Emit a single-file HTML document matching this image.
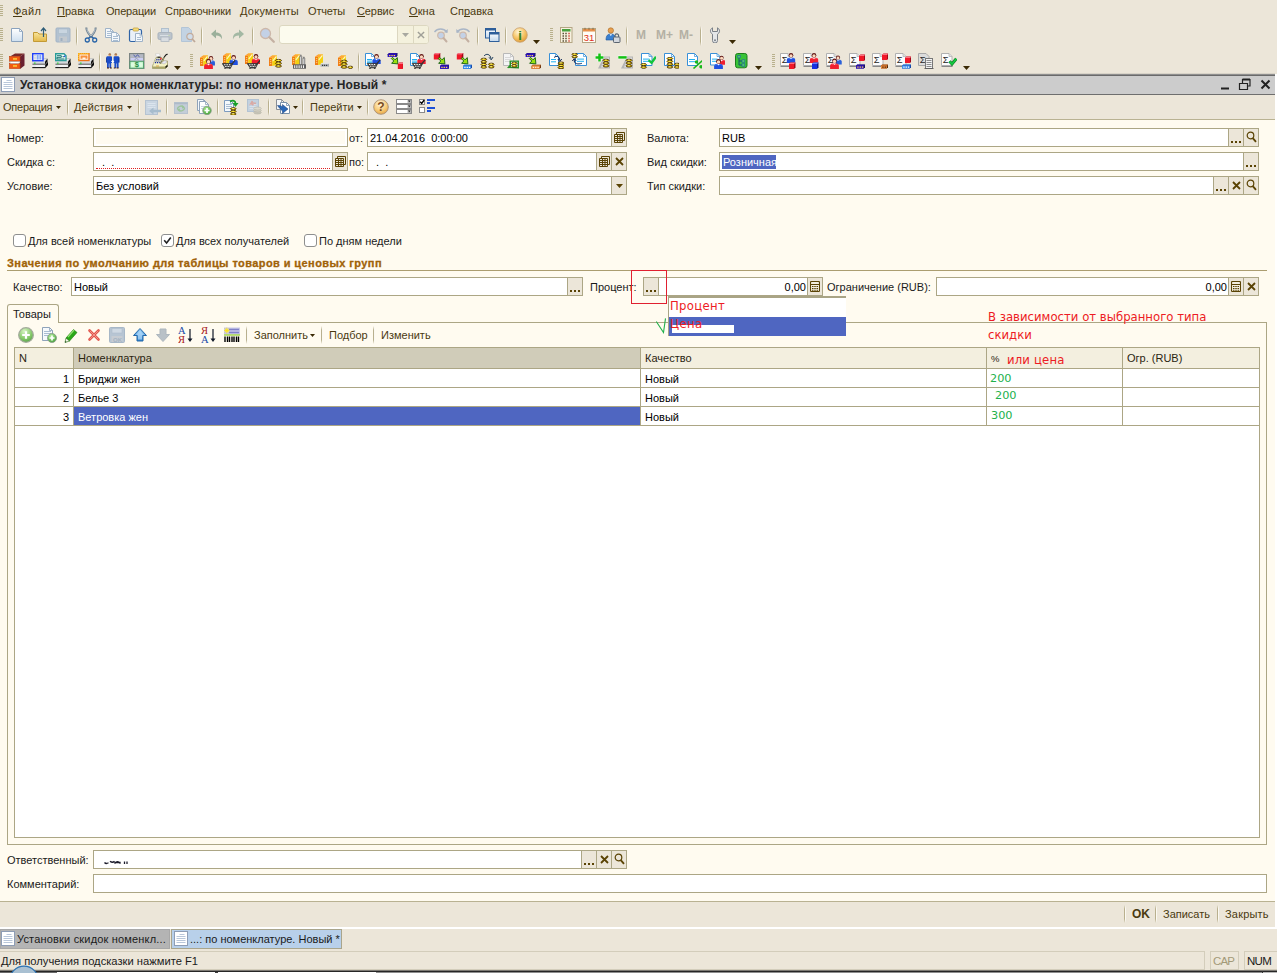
<!DOCTYPE html>
<html lang="ru"><head><meta charset="utf-8"><title>Установка скидок номенклатуры</title>
<style>
html,body{margin:0;padding:0}
body{width:1277px;height:973px;overflow:hidden;position:relative;background:#ece6d9;font-family:"Liberation Sans",sans-serif;font-size:11px;color:#000}
body div,body svg.i{position:absolute}
.g{left:0;top:0;width:0;height:0}
.t{white-space:pre;line-height:13px}
.t u{text-decoration:underline}
.grip{width:3px}
.grip i{position:absolute;left:0;width:3px;height:1px;background:#b8b08c}
.vs{width:2px;background:linear-gradient(to right,#b9b08e 0 1px,#fbf9f2 1px 2px);-webkit-mask-image:linear-gradient(to bottom,transparent,#000 22%,#000 78%,transparent);mask-image:linear-gradient(to bottom,transparent,#000 22%,#000 78%,transparent)}
</style></head>
<body>
<div class="g" id="menubar">
<div class="grip" style="left:0px;top:5px;height:12px"><i style="top:0px"></i><i style="top:2px"></i><i style="top:4px"></i><i style="top:6px"></i><i style="top:8px"></i><i style="top:10px"></i></div>
<div class="t" style="left:13px;top:5px;color:#4a3a10;letter-spacing:0.25px">Файл</div>
<div style="left:13px;top:16px;width:8.6px;height:1px;background:#4a3a10"></div>
<div class="t" style="left:57px;top:5px;color:#4a3a10">Правка</div>
<div style="left:57px;top:16px;width:7.9px;height:1px;background:#4a3a10"></div>
<div class="t" style="left:106px;top:5px;color:#4a3a10;letter-spacing:-0.19px">Операции</div>
<div class="t" style="left:165px;top:5px;color:#4a3a10;letter-spacing:-0.05px">Справочники</div>
<div class="t" style="left:240px;top:5px;color:#4a3a10;letter-spacing:0.25px">Документы</div>
<div class="t" style="left:308px;top:5px;color:#4a3a10;letter-spacing:-0.16px">Отчеты</div>
<div class="t" style="left:357px;top:5px;color:#4a3a10;letter-spacing:-0.1px">Сервис</div>
<div style="left:357px;top:16px;width:7.9px;height:1px;background:#4a3a10"></div>
<div class="t" style="left:409px;top:5px;color:#4a3a10;letter-spacing:0.1px">Окна</div>
<div style="left:409px;top:16px;width:8.7px;height:1px;background:#4a3a10"></div>
<div class="t" style="left:450px;top:5px;color:#4a3a10">Справка</div>
<div style="left:463.9px;top:16px;width:6.1px;height:1px;background:#4a3a10"></div>
</div>
<div class="g" id="toolbar-standard">
<div class="grip" style="left:0px;top:28px;height:14px"><i style="top:0px"></i><i style="top:2px"></i><i style="top:4px"></i><i style="top:6px"></i><i style="top:8px"></i><i style="top:10px"></i><i style="top:12px"></i></div>
<svg class="i" style="left:9px;top:27px" width="16" height="16" viewBox="0 0 16 16"><defs><linearGradient id="g1" x1="0" y1="0" x2="0" y2="1"><stop offset="0" stop-color="#ffffff"/><stop offset="1" stop-color="#cfe0f0"/></linearGradient></defs><path d="M2.5 1.5h8l3 3v10h-11z" fill="url(#g1)" stroke="#8aa2bd"/><path d="M10.5 1.5v3h3" fill="none" stroke="#8aa2bd" stroke-width=".8"/></svg>
<svg class="i" style="left:32px;top:27px" width="16" height="16" viewBox="0 0 16 16"><defs><linearGradient id="g2" x1="0" y1="0" x2="0" y2="1"><stop offset="0" stop-color="#f8e49a"/><stop offset="1" stop-color="#e3b94a"/></linearGradient></defs><path d="M1.500 5.500h4l1.500 1.500h7.500v7.500h-13z" fill="url(#g2)" stroke="#c39a36"/><path d="M11.500 10v-8.500M9 4l2.500-3l2.500 3" stroke="#2f5d78" stroke-width="1.200" fill="none"/></svg>
<svg class="i" style="left:55px;top:27px" width="16" height="16" viewBox="0 0 16 16"><rect x="1" y="1" width="14" height="14" rx="1" fill="#b3c2d1" stroke="#a3b4c6"/><rect x="3.500" y="2" width="9" height="4.500" fill="#c9d5e0" stroke="#a9b9c9" stroke-width=".6"/><rect x="4" y="9.500" width="8" height="5" fill="#c4c9ce"/><rect x="5.500" y="11" width="2" height="3" fill="#9fb0c0"/></svg>
<div class="vs" style="left:76px;top:26px;height:20px"></div>
<svg class="i" style="left:83px;top:27px" width="16" height="16" viewBox="0 0 16 16"><path d="M3.300 .5c0 3 2.200 6.500 5.700 10M12.700 .5c0 3-2.200 6.500-5.700 10" stroke="#6f8190" stroke-width="2" fill="none"/><path d="M3.800 1.500c.3 2.500 1.800 5 4.200 7.500M12.200 1.500c-.3 2.500-1.800 5-4.200 7.500" stroke="#d5dfe6" stroke-width=".7" fill="none"/><circle cx="4.300" cy="13" r="2" fill="none" stroke="#2b66a9" stroke-width="1.300"/><circle cx="11.700" cy="13" r="2" fill="none" stroke="#2b66a9" stroke-width="1.300"/><path d="M5.500 11.300L7.500 9.500M10.500 11.300L8.500 9.500" stroke="#2b66a9" stroke-width="1.400" fill="none"/></svg>
<svg class="i" style="left:105px;top:27px" width="16" height="16" viewBox="0 0 16 16"><path d="M0.5 1.5h5l3 3v6h-8z" fill="#f4f8fc" stroke="#9fb3c8"/><path d="M5.5 1.5v3h3" fill="none" stroke="#9fb3c8" stroke-width=".8"/><path d="M2 4.5h5" stroke="#a9bdd2" stroke-width="1"/><path d="M2 6.5h5" stroke="#a9bdd2" stroke-width="1"/><path d="M2 8.5h5" stroke="#a9bdd2" stroke-width="1"/><path d="M6.5 5.5h5l3 3v6h-8z" fill="#f4f8fc" stroke="#9fb3c8"/><path d="M11.5 5.5v3h3" fill="none" stroke="#9fb3c8" stroke-width=".8"/><path d="M8 9.5h5" stroke="#a9bdd2" stroke-width="1"/><path d="M8 11.5h5" stroke="#a9bdd2" stroke-width="1"/><path d="M8 13.5h5" stroke="#a9bdd2" stroke-width="1"/></svg>
<svg class="i" style="left:128px;top:27px" width="16" height="16" viewBox="0 0 16 16"><rect x="1.500" y="2.500" width="12" height="12" rx="1.500" fill="#e9f0f8" stroke="#2f63a6" stroke-width="1.200"/><rect x="5" y="1" width="5.500" height="3" rx="1" fill="#f4dc7c" stroke="#c8a23c" stroke-width=".8"/><path d="M7.5 6.5h4.5l2.5 2.5v5.5h-7z" fill="#f4f8fc" stroke="#9fb3c8"/><path d="M12.0 6.5v2.5h2.5" fill="none" stroke="#9fb3c8" stroke-width=".8"/><path d="M9 10.5h4" stroke="#a9bdd2" stroke-width="1"/><path d="M9 12.5h4" stroke="#a9bdd2" stroke-width="1"/></svg>
<div class="vs" style="left:150px;top:26px;height:20px"></div>
<svg class="i" style="left:157px;top:27px" width="16" height="16" viewBox="0 0 16 16"><rect x="4.500" y="1.500" width="7" height="5" fill="#cfdbe6" stroke="#b0bfcd"/><rect x="1" y="5.500" width="14" height="7" rx="1.500" fill="#bcc4cc" stroke="#a9b3bd"/><rect x="4" y="10" width="8" height="4.500" fill="#d9dde1" stroke="#aeb7c0" stroke-width=".8"/><path d="M3 8.500h10" stroke="#d9dfe5" stroke-width="1"/><rect x="11.500" y="8" width="1.200" height="1" fill="#b9d0a0"/></svg>
<svg class="i" style="left:180px;top:27px" width="16" height="16" viewBox="0 0 16 16"><path d="M1.500 0.500h7l3 3v11h-10z" fill="#c3d3e3" stroke="#b3c5d7"/><circle cx="10" cy="9.500" r="3.200" fill="#d0ddea" stroke="#c2ab9c" stroke-width="1.200"/><path d="M12.200 12l2.800 3" stroke="#bda798" stroke-width="1.800"/></svg>
<div class="vs" style="left:201px;top:26px;height:20px"></div>
<svg class="i" style="left:209px;top:28px" width="16" height="16" viewBox="0 0 16 16"><path d="M2 6l5-4.500v3c4 0 6.500 2.500 6 7c-.8-2.500-2.500-4-6-4v3z" fill="#9bb09b"/></svg>
<svg class="i" style="left:230px;top:28px" width="16" height="16" viewBox="0 0 16 16"><path d="M14 6l-5-4.500v3c-4 0-6.500 2.500-6 7c.8-2.500 2.500-4 6-4v3z" fill="#a3b8a3"/></svg>
<div class="vs" style="left:252px;top:26px;height:20px"></div>
<svg class="i" style="left:259px;top:27px" width="16" height="16" viewBox="0 0 16 16"><circle cx="6.500" cy="6.500" r="5" fill="#c3d1e6" stroke="#cdb8aa" stroke-width="1.300"/><path d="M10.300 10.300l4.500 4.500" stroke="#c4b0a2" stroke-width="2.200" stroke-linecap="round"/></svg>
<div style="left:279px;top:25px;width:150px;height:19px;background:#fcfbee;border:1px solid #dcd7c0;border-radius:3px;box-sizing:border-box"></div>
<div style="left:398px;top:26px;width:30px;height:17px;background:#f4f1dd;border-radius:0 2px 2px 0"></div>
<div style="left:397px;top:26px;width:1px;height:17px;background:#dcd7c0"></div>
<div style="left:413px;top:26px;width:1px;height:17px;background:#dcd7c0"></div>
<svg class="i" style="left:402px;top:33px" width="7" height="4" viewBox="0 0 7 4"><path d="M0 0H7L3.5 4Z" fill="#a8a8a0"/></svg>
<svg class="i" style="left:417px;top:31px" width="8" height="8" viewBox="0 0 9 9"><path d="M1 1L8 8M8 1L1 8" stroke="#a0a098" stroke-width="1.6" fill="none"/></svg>
<svg class="i" style="left:433px;top:27px" width="16" height="16" viewBox="0 0 16 16"><path d="M1.500 5c3-4 9-4 12.500 0" stroke="#aab6c6" stroke-width="1.300" fill="none"/><path d="M14.800 2l-.3 4l-3.700-.8z" fill="#aab6c6"/><circle cx="8" cy="8.500" r="3.300" fill="#c3d1e6" stroke="#cdb8aa" stroke-width="1.200"/><path d="M10.500 11l3 3.500" stroke="#c4b0a2" stroke-width="2" stroke-linecap="round"/></svg>
<svg class="i" style="left:455px;top:27px" width="16" height="16" viewBox="0 0 16 16"><path d="M14.500 5c-3-4-9-4-12.500 0" stroke="#aab6c6" stroke-width="1.300" fill="none"/><path d="M1.200 2l.3 4l3.700-.8z" fill="#aab6c6"/><circle cx="8" cy="8.500" r="3.300" fill="#c3d1e6" stroke="#cdb8aa" stroke-width="1.200"/><path d="M10.500 11l3 3.500" stroke="#c4b0a2" stroke-width="2" stroke-linecap="round"/></svg>
<div class="vs" style="left:477px;top:26px;height:20px"></div>
<svg class="i" style="left:484px;top:27px" width="16" height="16" viewBox="0 0 16 16"><defs><linearGradient id="g3" x1="0" y1="0" x2="0" y2="1"><stop offset="0" stop-color="#ffffff"/><stop offset="1" stop-color="#c4d8ec"/></linearGradient></defs><rect x="1.500" y="1.500" width="10" height="9.500" fill="url(#g3)" stroke="#2e5f9a"/><path d="M1.500 2.500h10" stroke="#2e5f9a" stroke-width="2"/><rect x="5.500" y="5.500" width="9.500" height="9" fill="url(#g3)" stroke="#2e5f9a"/><path d="M5.500 6.500h9.500" stroke="#2e5f9a" stroke-width="2"/></svg>
<div class="vs" style="left:505px;top:26px;height:20px"></div>
<svg class="i" style="left:512px;top:27px" width="16" height="16" viewBox="0 0 16 16"><defs><radialGradient id="g4" cx=".4" cy=".3" r=".8"><stop offset="0" stop-color="#fff6dc"/><stop offset=".5" stop-color="#f7c76a"/><stop offset="1" stop-color="#d8912a"/></radialGradient></defs><circle cx="8" cy="8" r="7.300" fill="url(#g4)" stroke="#c8a070" stroke-width=".8"/><text x="8" y="13" text-anchor="middle" font-family="Liberation Sans,sans-serif" font-weight="bold" font-size="13" fill="#2e7d1e">i</text></svg>
<svg class="i" style="left:533px;top:40px" width="7" height="4" viewBox="0 0 7 4"><path d="M0 0H7L3.5 4Z" fill="#3b2a05"/></svg>
<div class="grip" style="left:550px;top:28px;height:14px"><i style="top:0px"></i><i style="top:2px"></i><i style="top:4px"></i><i style="top:6px"></i><i style="top:8px"></i><i style="top:10px"></i><i style="top:12px"></i></div>
<svg class="i" style="left:558px;top:27px" width="16" height="16" viewBox="0 0 16 16"><rect x="2.500" y="0.500" width="11.500" height="15" fill="#f8f2e0" stroke="#b4a684"/><rect x="4" y="2" width="8.500" height="2.500" fill="#48a040"/><path d="M4.500 6.500h1.500M7.250 6.500h1.500M4.500 9h1.500M7.250 9h1.500M4.500 11.500h1.500M7.250 11.500h1.500M4.500 14h1.500M7.250 14h1.500" stroke="#5a5038" stroke-width="1.300"/><path d="M10.300 6.500h1.500M10.300 9h1.500M10.300 11.500h1.500M10.300 14h1.500" stroke="#d05040" stroke-width="1.300"/></svg>
<svg class="i" style="left:581px;top:27px" width="16" height="16" viewBox="0 0 16 16"><rect x="1.500" y="1.500" width="13" height="14" fill="#fffdf6" stroke="#b4a684"/><rect x="2" y="2" width="12" height="2.500" fill="#e8904a"/><path d="M4 .8v2M8 .8v2M12 .8v2" stroke="#8a6a40" stroke-width="1"/><text x="8" y="13.800" text-anchor="middle" font-family="Liberation Sans,sans-serif" font-size="9.500" fill="#e03020">31</text></svg>
<svg class="i" style="left:605px;top:27px" width="16" height="16" viewBox="0 0 16 16"><circle cx="5.800" cy="3.500" r="2.700" fill="#e8a050" stroke="#a86820" stroke-width=".6"/><path d="M1 13c0-4.500 1.800-6 4.800-6s4.800 1.500 4.800 6z" fill="#3a80d0" stroke="#1f559a" stroke-width=".6"/><path d="M4.500 7.200l1.300 1.800l1.300-1.800z" fill="#fff"/><rect x="8.500" y="10" width="6.500" height="5.500" rx=".8" fill="#d4d8de" stroke="#5a6470"/><path d="M10 10v-1.300a1.800 1.800 0 0 1 3.600 0v1.300" stroke="#5a6470" stroke-width="1.100" fill="none"/></svg>
<div class="vs" style="left:626px;top:26px;height:20px"></div>
<div class="t" style="left:636px;top:29px;color:#b4b0a4;font-weight:bold;font-size:12px">M</div>
<div class="t" style="left:656px;top:29px;color:#b4b0a4;font-weight:bold;font-size:12px">M+</div>
<div class="t" style="left:679px;top:29px;color:#b4b0a4;font-weight:bold;font-size:12px">M-</div>
<div class="vs" style="left:700px;top:26px;height:20px"></div>
<svg class="i" style="left:707px;top:27px" width="16" height="16" viewBox="0 0 16 16"><path d="M5.500 0.800c-2 1-2.800 3.500-1.200 5.400l1.200 1v6.300a2.500 2.500 0 0 0 5 0v-6.300l1.200-1c1.600-1.900.8-4.400-1.200-5.400v3.700h-5z" fill="#e4e6e8" stroke="#7a8088" stroke-width="1"/><circle cx="8" cy="13.200" r="1" fill="#7a8088"/></svg>
<svg class="i" style="left:729px;top:40px" width="7" height="4" viewBox="0 0 7 4"><path d="M0 0H7L3.5 4Z" fill="#3b2a05"/></svg>
</div>
<div class="g" id="toolbar-app">
<div class="grip" style="left:0px;top:54px;height:14px"><i style="top:0px"></i><i style="top:2px"></i><i style="top:4px"></i><i style="top:6px"></i><i style="top:8px"></i><i style="top:10px"></i><i style="top:12px"></i></div>
<svg class="i" style="left:9px;top:53px" width="16" height="16" viewBox="0 0 16 16"><path d="M1 3.500l5-3h9.500l-4.500 3z" fill="#7a2a2a"/><path d="M11 3.500l4.500-3v12l-4.500 3.500z" fill="#6a2030"/><rect x="0.500" y="3.500" width="10.500" height="5" fill="#f05a10" stroke="#c03a08" stroke-width=".6"/><rect x="0.500" y="10.500" width="10.500" height="5" fill="#f05a10" stroke="#c03a08" stroke-width=".6"/><path d="M0.500 8.500h10.500l-1.500 2h-8z" fill="#ffffff" stroke="#888" stroke-width=".4"/><rect x="4" y="5.300" width="4" height="1.300" fill="#ffe040"/><rect x="4" y="12.300" width="4" height="1.300" fill="#ffe040"/></svg>
<svg class="i" style="left:32px;top:53px" width="16" height="16" viewBox="0 0 16 16"><path d="M.8 8.500l2.600-2.800h12.100l-2.600 2.800z" fill="#e6eaec" stroke="#8a8e92" stroke-width=".4"/><path d="M.5 8.500h12.500v2.700h-12.500z" fill="#c6cace"/><path d="M.5 9h12.500" stroke="#eef0f2" stroke-width=".8"/><path d="M.5 11.300h12.700" stroke="#3a3c3e" stroke-width=".9"/><path d="M13 8.500l2.500-2.800v2.900l-2.500 2.800z" fill="#0c0c0c"/><rect x="2" y="9.600" width="1.600" height="1" fill="#18d818"/><path d="M.3 11.800h12.900v2.400h-12.900z" fill="#e8eaec"/><path d="M3.500 13h8" stroke="#fff" stroke-width="1"/><path d="M.3 14.600h13" stroke="#161616" stroke-width="1.100"/><path d="M13.200 11.800l2.800-3.100v3.200l-2.800 3.300z" fill="#0c0c0c"/><rect x=".7" y=".7" width="10.300" height="7" fill="#eef3ff" stroke="#2040f8" stroke-width="1.400"/><path d="M5.300 1.800v4.800M7 1.800v4.800M8.700 1.800v4.800" stroke="#6a96f4" stroke-width="1"/><path d="M1.800 2.600h2.600M1.800 4.200h2.600M1.800 5.800h2.600" stroke="#c8ccd4" stroke-width=".9"/></svg>
<svg class="i" style="left:55px;top:53px" width="16" height="16" viewBox="0 0 16 16"><path d="M.8 8.500l2.600-2.800h12.100l-2.600 2.800z" fill="#e6eaec" stroke="#8a8e92" stroke-width=".4"/><path d="M.5 8.500h12.500v2.700h-12.500z" fill="#c6cace"/><path d="M.5 9h12.500" stroke="#eef0f2" stroke-width=".8"/><path d="M.5 11.300h12.700" stroke="#3a3c3e" stroke-width=".9"/><path d="M13 8.500l2.500-2.800v2.900l-2.500 2.800z" fill="#0c0c0c"/><rect x="2" y="9.600" width="1.600" height="1" fill="#18d818"/><path d="M.3 11.800h12.900v2.400h-12.900z" fill="#e8eaec"/><path d="M3.500 13h8" stroke="#fff" stroke-width="1"/><path d="M.3 14.600h13" stroke="#161616" stroke-width="1.100"/><path d="M13.200 11.800l2.800-3.100v3.200l-2.800 3.300z" fill="#0c0c0c"/><path d="M.7 .7h8.300l2 2v4.800h-10.300z" fill="#f4fffd" stroke="#2a9c98" stroke-width="1.400"/><path d="M2 2.700h4.300v1.600h-4.300M2 4.300v1.700h7.500M7.500 3.700l2 .1" stroke="#15706c" stroke-width="1" fill="none"/><rect x="9" y="2.600" width="1.300" height="1.300" fill="#2040f0"/></svg>
<svg class="i" style="left:78px;top:53px" width="16" height="16" viewBox="0 0 16 16"><path d="M.8 8.500l2.600-2.800h12.100l-2.600 2.800z" fill="#e6eaec" stroke="#8a8e92" stroke-width=".4"/><path d="M.5 8.500h12.500v2.700h-12.500z" fill="#c6cace"/><path d="M.5 9h12.500" stroke="#eef0f2" stroke-width=".8"/><path d="M.5 11.300h12.700" stroke="#3a3c3e" stroke-width=".9"/><path d="M13 8.500l2.500-2.800v2.900l-2.500 2.800z" fill="#0c0c0c"/><rect x="2" y="9.600" width="1.600" height="1" fill="#18d818"/><path d="M.3 11.800h12.900v2.400h-12.900z" fill="#e8eaec"/><path d="M3.500 13h8" stroke="#fff" stroke-width="1"/><path d="M.3 14.600h13" stroke="#161616" stroke-width="1.100"/><path d="M13.200 11.800l2.800-3.100v3.200l-2.800 3.300z" fill="#0c0c0c"/><rect x=".7" y=".7" width="10.300" height="6.800" fill="#fff4ea" stroke="#f07418" stroke-width="1.400"/><path d="M.7 .7h10.300M.7 .7v6.800" stroke="#ffe030" stroke-width="1.400" stroke-dasharray="1 1"/><path d="M2.500 2.500h7v3.300h-2v-1.300h-3v1.300h-2z" fill="#f8903c"/></svg>
<div class="vs" style="left:99px;top:52px;height:20px"></div>
<svg class="i" style="left:104px;top:53px" width="16" height="16" viewBox="0 0 16 16"><circle cx="5.800" cy="2" r="1.400" fill="#e0a878"/><path d="M4.400 1.500c.3-1.300 2.500-1.300 2.800 0z" fill="#7a5030"/><circle cx="11.800" cy="2" r="1.400" fill="#e0a878"/><path d="M10.400 1.500c.3-1.300 2.500-1.300 2.800 0z" fill="#7a5030"/><path d="M2.300 4.200q.2-1 1.200-1h3.500q1 0 1 1v5.800h-.8v5h-1.800v-4.500h-.6v4.500h-1.800v-5.500h-.7z" fill="#1a4cc8"/><path d="M15.300 4.200q-.2-1-1.200-1h-3.500q-1 0-1 1v5.800h.8v5h1.800v-4.500h.6v4.500h1.800v-5.500h.7z" fill="#1a4cc8"/><path d="M2.300 4.200v5.300h.7v-4.500zM15.300 4.200v5.300h-.7v-4.500z" fill="#0c2c88"/><path d="M7 8.600l1.700-1.500l1.700 1.500l-1.700 1.500z" fill="#fff"/><path d="M3 15h2M6 15h1.800M9.800 15h1.800M12.600 15h2" stroke="#4a2010" stroke-width="1"/></svg>
<svg class="i" style="left:129px;top:53px" width="16" height="16" viewBox="0 0 16 16"><g transform="translate(-1,0)"><rect x="1.500" y="0.500" width="14.500" height="15" fill="#a8acac" stroke="#7c8484"/><path d="M2.500 1.500h12.500v2.800h-12.500z" fill="#b4b8c4"/><path d="M5.500 2l2 1.800l2-1.800l2 1.800" stroke="#3848a8" stroke-width=".9" fill="none"/><path d="M2.500 4.800h12.500v2.800h-12.500z" fill="#cccef4"/><path d="M6.500 6.800l2-1.300l2 1.300" stroke="#8890a0" stroke-width=".8" fill="none"/><rect x="2" y="8.300" width="13.500" height="6.900" fill="#c4f4cc" stroke="#4c9c68" stroke-width=".9"/><ellipse cx="4.800" cy="11.700" rx="2" ry="2.300" fill="#dcfce0"/><ellipse cx="12.700" cy="11.700" rx="2" ry="2.300" fill="#dcfce0"/><text x="8.750" y="14.400" text-anchor="middle" font-family="Liberation Sans,sans-serif" font-weight="bold" font-size="7.500" fill="#2a8c48">$</text></g></svg>
<svg class="i" style="left:152px;top:53px" width="16" height="16" viewBox="0 0 16 16"><path d="M.5 13l3.500-8.500h5.500l2.300 3.500h3.700v5.500l-2 2h-13z" fill="#f4f2c4" stroke="#8a8850" stroke-width=".6"/><path d="M.5 13.500h13l2-2v2l-2 2h-13z" fill="#a8a468"/><path d="M13.500 13.500l2-2v2l-2 2z" fill="#181810"/><path d="M4 5.500h5l-1.800 5.500h-5.700z" fill="#f4f2c4"/><path d="M4.300 6.300h1.200M6.300 6.300h1.200M8.300 6.300h.8M3.500 8h1.200M5.500 8h1.200M7.500 8h1M2.800 9.700h1.200M4.800 9.700h1.200M6.800 9.700h1" stroke="#1c2c9c" stroke-width="1.200"/><path d="M3.500 0.800h4l.8 2.500h-4z" fill="#fff" stroke="#b0b0b0" stroke-width=".4"/><path d="M5.500 4.200h3" stroke="#101010" stroke-width="1"/><path d="M8.500 10.500l4.500-7.500c.5-1.500 2-1.500 2.500-2" stroke="#101010" stroke-width="1.100" fill="none"/><path d="M8.800 10.300l3.600-6" stroke="#b4b078" stroke-width="1"/><rect x="8.300" y="4.800" width="1.300" height="1.800" fill="#f01818"/><path d="M9.500 10l3.500-2.500l2 1.500l-3 2z" fill="#e8e8f4" stroke="#a0a0a8" stroke-width=".4"/><path d="M4 13h3" stroke="#d89830" stroke-width=".8"/></svg>
<svg class="i" style="left:174px;top:66px" width="7" height="4" viewBox="0 0 7 4"><path d="M0 0H7L3.5 4Z" fill="#3b2a05"/></svg>
<div class="grip" style="left:190px;top:54px;height:14px"><i style="top:0px"></i><i style="top:2px"></i><i style="top:4px"></i><i style="top:6px"></i><i style="top:8px"></i><i style="top:10px"></i><i style="top:12px"></i></div>
<svg class="i" style="left:199px;top:53px" width="16" height="16" viewBox="0 0 16 16"><g transform="translate(1,2)"><path d="M0 3l3.200-2.400v10.400h-3.200z" fill="#f07c14"/><path d="M3.200 .6h4.800v9.400l-4.800 1z" fill="#f4d010"/><path d="M0 3l3.200-2.400h4.800l-3 2.400z" fill="#ffa838"/><path d="M3.800 6l3.600-4.600" stroke="#fff8c0" stroke-width="1.200"/><path d="M.9 4.600h1.400M.9 6.600h1.400M.9 8.600h1.400" stroke="#ffc878" stroke-width="1"/></g><g transform="translate(12,3) scale(0.9)"><path d="M-4.400 10.500v-3.300c0-1.700 1.600-2.500 4.400-2.500s4.400.8 4.400 2.500v3.300z" fill="#2a60d8"/><path d="M-3.400 6.400c.8-1 2-1.200 3.400-1.200s2.600.2 3.400 1.200c-1.500-.5-5.300-.5-6.800 0z" fill="#6090ff"/><path d="M-1.300 4.700l1.300 1.900l1.300-1.900z" fill="#fff"/><circle cx="0" cy="2.400" r="2.400" fill="#5e1414"/><ellipse cx="0" cy="2.900" rx="1.700" ry="1.700" fill="#ffd9bc"/></g><g transform="translate(9.5,5.8) scale(1.0)"><path d="M-4.400 10.500v-3.300c0-1.700 1.600-2.500 4.400-2.500s4.400.8 4.400 2.500v3.300z" fill="#f02030"/><path d="M-3.400 6.400c.8-1 2-1.200 3.400-1.200s2.600.2 3.400 1.200c-1.500-.5-5.300-.5-6.800 0z" fill="#ff7078"/><path d="M-1.300 4.700l1.300 1.900l1.300-1.900z" fill="#fff"/><circle cx="0" cy="2.400" r="2.400" fill="#5e1414"/><ellipse cx="0" cy="2.900" rx="1.700" ry="1.700" fill="#ffd9bc"/></g></svg>
<svg class="i" style="left:222px;top:53px" width="16" height="16" viewBox="0 0 16 16"><g transform="translate(1,0)"><path d="M0 3l3.200-2.400v10.400h-3.200z" fill="#f07c14"/><path d="M3.200 .6h4.800v9.400l-4.800 1z" fill="#f4d010"/><path d="M0 3l3.200-2.400h4.800l-3 2.400z" fill="#ffa838"/><path d="M3.800 6l3.600-4.600" stroke="#fff8c0" stroke-width="1.200"/><path d="M.9 4.600h1.400M.9 6.600h1.400M.9 8.600h1.400" stroke="#ffc878" stroke-width="1"/></g><g transform="translate(11.6,2) scale(0.95)"><path d="M-4.400 10.500v-3.300c0-1.700 1.600-2.500 4.400-2.500s4.400.8 4.400 2.500v3.300z" fill="#2050e0"/><path d="M-3.400 6.400c.8-1 2-1.200 3.400-1.200s2.600.2 3.400 1.200c-1.500-.5-5.300-.5-6.800 0z" fill="#6090ff"/><path d="M-1.300 4.700l1.300 1.900l1.300-1.900z" fill="#fff"/><circle cx="0" cy="2.400" r="2.400" fill="#5e1414"/><ellipse cx="0" cy="2.900" rx="1.700" ry="1.700" fill="#ffd9bc"/></g><g transform="translate(0.3,10.6) scale(1.05)"><path d="M0 0h10l-2.200 4.200h-5z" fill="#444" stroke="#333" stroke-width=".8"/><path d="M1.700 1.100h1.300M4 1.100h1.300M6.300 1.100h1.300M2.800 2.800h1.200M5 2.800h1.200M7 2.800h.8" stroke="#fff" stroke-width="1"/><path d="M9.300 .3l3-3.600" stroke="#333" stroke-width="1.200"/><path d="M2.800 4.400l-.4 1.500M7 4.400l.4 1.500" stroke="#333" stroke-width="1.400"/></g></svg>
<svg class="i" style="left:244px;top:53px" width="16" height="16" viewBox="0 0 16 16"><g transform="translate(1,0)"><path d="M0 3l3.200-2.400v10.400h-3.200z" fill="#f07c14"/><path d="M3.200 .6h4.800v9.400l-4.800 1z" fill="#f4d010"/><path d="M0 3l3.200-2.400h4.800l-3 2.400z" fill="#ffa838"/><path d="M3.800 6l3.600-4.600" stroke="#fff8c0" stroke-width="1.200"/><path d="M.9 4.600h1.400M.9 6.600h1.400M.9 8.600h1.400" stroke="#ffc878" stroke-width="1"/></g><g transform="translate(12,1) scale(0.95)"><path d="M-4.400 10.500v-3.300c0-1.700 1.600-2.500 4.400-2.500s4.400.8 4.400 2.500v3.300z" fill="#f02030"/><path d="M-3.400 6.400c.8-1 2-1.200 3.400-1.200s2.600.2 3.400 1.200c-1.500-.5-5.300-.5-6.800 0z" fill="#ff7078"/><path d="M-1.300 4.700l1.300 1.900l1.300-1.900z" fill="#fff"/><circle cx="0" cy="2.400" r="2.400" fill="#5e1414"/><ellipse cx="0" cy="2.900" rx="1.700" ry="1.700" fill="#ffd9bc"/></g><g transform="translate(3.3,10.6) scale(1.05)"><path d="M0 0h10l-2.200 4.200h-5z" fill="#444" stroke="#333" stroke-width=".8"/><path d="M1.700 1.100h1.300M4 1.100h1.300M6.300 1.100h1.300M2.800 2.800h1.200M5 2.800h1.200M7 2.800h.8" stroke="#fff" stroke-width="1"/><path d="M9.300 .3l3-3.600" stroke="#333" stroke-width="1.200"/><path d="M2.800 4.400l-.4 1.500M7 4.400l.4 1.500" stroke="#333" stroke-width="1.400"/></g></svg>
<svg class="i" style="left:266px;top:53px" width="16" height="16" viewBox="0 0 16 16"><g transform="translate(3,2)"><path d="M0 3l3.200-2.400v10.400h-3.200z" fill="#f07c14"/><path d="M3.200 .6h4.800v9.400l-4.800 1z" fill="#f4d010"/><path d="M0 3l3.200-2.400h4.800l-3 2.400z" fill="#ffa838"/><path d="M3.800 6l3.600-4.600" stroke="#fff8c0" stroke-width="1.200"/><path d="M.9 4.600h1.400M.9 6.600h1.400M.9 8.600h1.400" stroke="#ffc878" stroke-width="1"/></g><g transform="translate(9.5,6.2)"><ellipse cx="3.0" cy="6.8999999999999995" rx="3.0" ry="1.100" fill="#ffe000" stroke="#3e2600" stroke-width=".9"/><path d="M1.8 6.6h2" stroke="#fffcc0" stroke-width=".7"/><ellipse cx="3.0" cy="4.1" rx="3.0" ry="1.100" fill="#ffe000" stroke="#3e2600" stroke-width=".9"/><path d="M1.8 3.8h2" stroke="#fffcc0" stroke-width=".7"/><ellipse cx="3.0" cy="1.3" rx="3.0" ry="1.100" fill="#ffe000" stroke="#3e2600" stroke-width=".9"/><path d="M1.8 1.0h2" stroke="#fffcc0" stroke-width=".7"/></g></svg>
<svg class="i" style="left:290px;top:53px" width="16" height="16" viewBox="0 0 16 16"><g transform="translate(2,1)"><path d="M0 3l3.200-2.400v10.400h-3.200z" fill="#f07c14"/><path d="M3.200 .6h4.800v9.400l-4.800 1z" fill="#f4d010"/><path d="M0 3l3.200-2.400h4.800l-3 2.400z" fill="#ffa838"/><path d="M3.800 6l3.600-4.600" stroke="#fff8c0" stroke-width="1.200"/><path d="M.9 4.600h1.400M.9 6.600h1.400M.9 8.600h1.400" stroke="#ffc878" stroke-width="1"/></g><path d="M9.800 12v-8.500l1-1.800l1 1.800v8.500M13 12v-6.500l.9-1.700l.9 1.700v6.500" fill="#a8a8a8" stroke="#5c5c5c" stroke-width=".6"/><path d="M10.500 4v7.500M13.700 6v5.500" stroke="#f0f0f0" stroke-width=".7"/><path d="M3 11.300h13v4.400h-13z" fill="#5c5c5c"/><path d="M4.700 12.300v2.800M6.900 12.300v2.800M9.100 12.300v2.800M11.300 12.300v2.800M13.500 12.300v2.800" stroke="#f4f4f4" stroke-width="1.100"/></svg>
<svg class="i" style="left:313px;top:53px" width="16" height="16" viewBox="0 0 16 16"><g transform="translate(2,1)"><path d="M0 3l3.200-2.400v10.400h-3.200z" fill="#f07c14"/><path d="M3.200 .6h4.800v9.400l-4.800 1z" fill="#f4d010"/><path d="M0 3l3.200-2.400h4.800l-3 2.400z" fill="#ffa838"/><path d="M3.800 6l3.600-4.600" stroke="#fff8c0" stroke-width="1.200"/><path d="M.9 4.600h1.400M.9 6.600h1.400M.9 8.600h1.400" stroke="#ffc878" stroke-width="1"/></g><path d="M7.500 11l1.200-1.200h8.300l-1.200 1.200z" fill="#e0e2e4"/><path d="M7.500 11h8.300v2.700h-8.300z" fill="#b4b8bc"/><path d="M15.800 11l1.200-1.200v2.700l-1.200 1.200z" fill="#3c4044"/><path d="M9 12.400h1.200M11 12.400h1.200M13 12.400h1.200" stroke="#34383c" stroke-width="1.100"/></svg>
<svg class="i" style="left:337px;top:53px" width="16" height="16" viewBox="0 0 16 16"><g transform="translate(1,2)"><path d="M0 3l3.200-2.400v10.400h-3.200z" fill="#f07c14"/><path d="M3.200 .6h4.800v9.400l-4.800 1z" fill="#f4d010"/><path d="M0 3l3.200-2.400h4.800l-3 2.400z" fill="#ffa838"/><path d="M3.800 6l3.600-4.600" stroke="#fff8c0" stroke-width="1.200"/><path d="M.9 4.600h1.400M.9 6.600h1.400M.9 8.600h1.400" stroke="#ffc878" stroke-width="1"/></g><g transform="translate(4,7)"><ellipse cx="3.1" cy="7.1" rx="3.1" ry="1.100" fill="#ffe000" stroke="#3e2600" stroke-width=".9"/><path d="M1.9000000000000001 6.8h2" stroke="#fffcc0" stroke-width=".7"/><ellipse cx="3.1" cy="4.2" rx="3.1" ry="1.100" fill="#ffe000" stroke="#3e2600" stroke-width=".9"/><path d="M1.9000000000000001 3.9h2" stroke="#fffcc0" stroke-width=".7"/><ellipse cx="3.1" cy="1.3" rx="3.1" ry="1.100" fill="#ffe000" stroke="#3e2600" stroke-width=".9"/><path d="M1.9000000000000001 1.0h2" stroke="#fffcc0" stroke-width=".7"/></g><g transform="translate(11,13)"><ellipse cx="2.4" cy="1.3" rx="2.4" ry="1.100" fill="#ffe000" stroke="#3e2600" stroke-width=".9"/><path d="M1.2 1.0h2" stroke="#fffcc0" stroke-width=".7"/></g></svg>
<div class="vs" style="left:358px;top:52px;height:20px"></div>
<svg class="i" style="left:365px;top:53px" width="16" height="16" viewBox="0 0 16 16"><path d="M0.5 0.5h6l3 3v9h-9z" fill="#fff" stroke="#3890d8"/><path d="M6.5 0.5v3h3" fill="none" stroke="#3890d8" stroke-width=".7"/><path d="M2 6.5h5" stroke="#20b0f0" stroke-width="1"/><path d="M2 8.1h5" stroke="#20b0f0" stroke-width="1"/><path d="M2 9.7h5" stroke="#20b0f0" stroke-width="1"/><g transform="translate(11.5,1) scale(0.95)"><path d="M-4.400 10.500v-3.300c0-1.700 1.600-2.500 4.400-2.500s4.400.8 4.400 2.500v3.300z" fill="#2050e0"/><path d="M-3.400 6.400c.8-1 2-1.200 3.400-1.200s2.600.2 3.400 1.200c-1.500-.5-5.300-.5-6.800 0z" fill="#6090ff"/><path d="M-1.300 4.700l1.300 1.900l1.300-1.900z" fill="#fff"/><circle cx="0" cy="2.400" r="2.400" fill="#5e1414"/><ellipse cx="0" cy="2.900" rx="1.700" ry="1.700" fill="#ffd9bc"/></g><g transform="translate(2.2,10.4) scale(1.05)"><path d="M0 0h10l-2.200 4.200h-5z" fill="#444" stroke="#333" stroke-width=".8"/><path d="M1.700 1.100h1.300M4 1.100h1.300M6.300 1.100h1.300M2.800 2.800h1.200M5 2.800h1.200M7 2.800h.8" stroke="#fff" stroke-width="1"/><path d="M9.300 .3l3-3.600" stroke="#333" stroke-width="1.200"/><path d="M2.800 4.400l-.4 1.500M7 4.400l.4 1.500" stroke="#333" stroke-width="1.400"/></g></svg>
<svg class="i" style="left:387px;top:53px" width="16" height="16" viewBox="0 0 16 16"><g transform="translate(0.8,0)"><path d="M0 1.200l1.200-1.200h8.5v2.800l-1.200 1.200h-8.5z" fill="#181858"/><path d="M0 1.200h8.5v2.800h-8.5z" fill="#3010c8"/><path d="M0 1.200l1.200-1.200h8.5l-1.200 1.200z" fill="#3010c8" opacity=".7"/><path d="M1.300 2.600h1.300M3.600 2.600h1.300M5.900 2.600h1.300" stroke="#ffe040" stroke-width="1.200"/></g><g transform="translate(3.8,3.8)"><path d="M.5 1.700l1.200-1.200l2.500 2.500l2.300-2.200l.6 6.300l-6.300-.6l2.200-2.300z" fill="#98e010" stroke="#145c14" stroke-width=".9" stroke-linejoin="round"/></g><g transform="translate(10.8,9.5)"><path d="M0 1.500l1.500-1.500h5v5l-1.500 1.500z" fill="#a00818"/><path d="M0 1.500h5v5h-5z" fill="#f01828"/><path d="M0 1.500l1.500-1.500h5l-1.500 1.500z" fill="#ff7080"/></g></svg>
<svg class="i" style="left:410px;top:53px" width="16" height="16" viewBox="0 0 16 16"><path d="M0.5 0.5h6l3 3v9h-9z" fill="#fff" stroke="#3890d8"/><path d="M6.5 0.5v3h3" fill="none" stroke="#3890d8" stroke-width=".7"/><path d="M2 6.5h5" stroke="#20b0f0" stroke-width="1"/><path d="M2 8.1h5" stroke="#20b0f0" stroke-width="1"/><path d="M2 9.7h5" stroke="#20b0f0" stroke-width="1"/><g transform="translate(11.5,1) scale(0.95)"><path d="M-4.400 10.500v-3.300c0-1.700 1.600-2.500 4.400-2.500s4.400.8 4.400 2.500v3.300z" fill="#f02030"/><path d="M-3.400 6.400c.8-1 2-1.200 3.400-1.200s2.600.2 3.400 1.200c-1.500-.5-5.300-.5-6.800 0z" fill="#ff7078"/><path d="M-1.300 4.700l1.300 1.900l1.300-1.900z" fill="#fff"/><circle cx="0" cy="2.400" r="2.400" fill="#5e1414"/><ellipse cx="0" cy="2.900" rx="1.700" ry="1.700" fill="#ffd9bc"/></g><g transform="translate(2.2,10.4) scale(1.05)"><path d="M0 0h10l-2.200 4.200h-5z" fill="#444" stroke="#333" stroke-width=".8"/><path d="M1.700 1.100h1.300M4 1.100h1.300M6.300 1.100h1.300M2.800 2.800h1.200M5 2.800h1.200M7 2.800h.8" stroke="#fff" stroke-width="1"/><path d="M9.300 .3l3-3.600" stroke="#333" stroke-width="1.200"/><path d="M2.800 4.400l-.4 1.500M7 4.400l.4 1.500" stroke="#333" stroke-width="1.400"/></g></svg>
<svg class="i" style="left:433px;top:53px" width="16" height="16" viewBox="0 0 16 16"><g transform="translate(0.8,0)"><path d="M0 1.500l1.500-1.500h5v5l-1.500 1.500z" fill="#a00818"/><path d="M0 1.500h5v5h-5z" fill="#f01828"/><path d="M0 1.500l1.500-1.500h5l-1.500 1.500z" fill="#ff7080"/></g><g transform="translate(4.8,3.8)"><path d="M.5 1.700l1.200-1.200l2.500 2.500l2.300-2.200l.6 6.300l-6.300-.6l2.200-2.300z" fill="#98e010" stroke="#145c14" stroke-width=".9" stroke-linejoin="round"/></g><g transform="translate(7,11.8)"><path d="M0 1.200l1.200-1.200h8.5v2.800l-1.200 1.200h-8.5z" fill="#181858"/><path d="M0 1.200h8.5v2.800h-8.5z" fill="#3010c8"/><path d="M0 1.200l1.200-1.200h8.5l-1.200 1.200z" fill="#3010c8" opacity=".7"/><path d="M1.300 2.600h1.300M3.600 2.600h1.300M5.900 2.600h1.300" stroke="#ffe040" stroke-width="1.200"/></g></svg>
<svg class="i" style="left:456px;top:53px" width="16" height="16" viewBox="0 0 16 16"><g transform="translate(0.8,0)"><path d="M0 1.500l1.500-1.500h5v5l-1.500 1.500z" fill="#a00818"/><path d="M0 1.500h5v5h-5z" fill="#f01828"/><path d="M0 1.500l1.500-1.500h5l-1.500 1.500z" fill="#ff7080"/></g><g transform="translate(4.8,3.8)"><path d="M.5 1.700l1.200-1.200l2.500 2.500l2.300-2.200l.6 6.300l-6.300-.6l2.200-2.300z" fill="#98e010" stroke="#145c14" stroke-width=".9" stroke-linejoin="round"/></g><g transform="translate(7,11.8)"><path d="M0 1.200l1.200-1.200h7.8v2.800l-1.200 1.200h-7.8z" fill="#1848a8"/><path d="M0 1.200h7.8v2.800h-7.8z" fill="#3890f0"/><path d="M0 1.200l1.200-1.200h7.8l-1.200 1.200z" fill="#3890f0" opacity=".7"/><path d="M1.300 2.600h1.300M3.600 2.600h1.300M5.900 2.600h1.300" stroke="#ffffff" stroke-width="1.200"/></g></svg>
<svg class="i" style="left:480px;top:53px" width="16" height="16" viewBox="0 0 16 16"><g transform="translate(1,5)"><ellipse cx="2.8" cy="9.100000000000001" rx="2.8" ry="1.100" fill="#ffe000" stroke="#3e2600" stroke-width=".9"/><path d="M1.5999999999999999 8.8h2" stroke="#fffcc0" stroke-width=".7"/><ellipse cx="2.8" cy="6.5" rx="2.8" ry="1.100" fill="#ffe000" stroke="#3e2600" stroke-width=".9"/><path d="M1.5999999999999999 6.2h2" stroke="#fffcc0" stroke-width=".7"/><ellipse cx="2.8" cy="3.9000000000000004" rx="2.8" ry="1.100" fill="#ffe000" stroke="#3e2600" stroke-width=".9"/><path d="M1.5999999999999999 3.6h2" stroke="#fffcc0" stroke-width=".7"/><ellipse cx="2.8" cy="1.3" rx="2.8" ry="1.100" fill="#ffe000" stroke="#3e2600" stroke-width=".9"/><path d="M1.5999999999999999 1.0h2" stroke="#fffcc0" stroke-width=".7"/></g><g transform="translate(8.5,10)"><ellipse cx="2.8" cy="3.9000000000000004" rx="2.8" ry="1.100" fill="#ffe000" stroke="#3e2600" stroke-width=".9"/><path d="M1.5999999999999999 3.6h2" stroke="#fffcc0" stroke-width=".7"/><ellipse cx="2.8" cy="1.3" rx="2.8" ry="1.100" fill="#ffe000" stroke="#3e2600" stroke-width=".9"/><path d="M1.5999999999999999 1.0h2" stroke="#fffcc0" stroke-width=".7"/></g><path d="M4 3c2-2.500 6-2.500 7 2.500" stroke="#183858" stroke-width="1" fill="none"/><path d="M9 4.300l2.200 2.500l1.800-2.700" stroke="#183858" stroke-width="1" fill="none"/></svg>
<svg class="i" style="left:503px;top:53px" width="16" height="16" viewBox="0 0 16 16"><path d="M0.5 0.5h7l3 3v9h-10z" fill="#f4f4f4" stroke="#b8b8b8"/><path d="M7.5 0.5v3h3" fill="none" stroke="#b8b8b8" stroke-width=".7"/><path d="M2 4.5h6" stroke="#d8d8d8" stroke-width="1"/><path d="M2 6.5h6" stroke="#d8d8d8" stroke-width="1"/><path d="M2 8.5h6" stroke="#d8d8d8" stroke-width="1"/><path d="M4 15l2.500-3v-4.500h9.500v8z" fill="#289028"/><rect x="8" y="8.800" width="6.500" height="5.200" fill="#f4fff4"/><g transform="translate(8.5,9)"><ellipse cx="2.8" cy="3.9000000000000004" rx="2.8" ry="1.100" fill="#ffe000" stroke="#3e2600" stroke-width=".9"/><path d="M1.5999999999999999 3.6h2" stroke="#fffcc0" stroke-width=".7"/><ellipse cx="2.8" cy="1.3" rx="2.8" ry="1.100" fill="#ffe000" stroke="#3e2600" stroke-width=".9"/><path d="M1.5999999999999999 1.0h2" stroke="#fffcc0" stroke-width=".7"/></g></svg>
<svg class="i" style="left:525px;top:53px" width="16" height="16" viewBox="0 0 16 16"><g transform="translate(0.8,0)"><path d="M0 1.200l1.200-1.200h8.5v2.800l-1.200 1.200h-8.5z" fill="#181858"/><path d="M0 1.200h8.5v2.800h-8.5z" fill="#3010c8"/><path d="M0 1.200l1.200-1.200h8.5l-1.200 1.200z" fill="#3010c8" opacity=".7"/><path d="M1.300 2.600h1.300M3.600 2.600h1.300M5.900 2.600h1.300" stroke="#ffe040" stroke-width="1.200"/></g><g transform="translate(3.8,3.8)"><path d="M.5 1.700l1.200-1.200l2.500 2.500l2.300-2.200l.6 6.300l-6.300-.6l2.200-2.300z" fill="#98e010" stroke="#145c14" stroke-width=".9" stroke-linejoin="round"/></g><g transform="translate(6.5,11.8)"><path d="M0 1.200l1.200-1.200h8.3v2.800l-1.200 1.200h-8.3z" fill="#703810"/><path d="M0 1.200h8.3v2.800h-8.3z" fill="#f09040"/><path d="M0 1.200l1.200-1.200h8.3l-1.200 1.200z" fill="#f09040" opacity=".7"/><path d="M1.300 2.600h1.300M3.600 2.600h1.300M5.900 2.600h1.300" stroke="#fff0d8" stroke-width="1.200"/></g></svg>
<svg class="i" style="left:548px;top:53px" width="16" height="16" viewBox="0 0 16 16"><path d="M1.5 0.5h6l3 3v9h-9z" fill="#fff" stroke="#3890d8"/><path d="M7.5 0.5v3h3" fill="none" stroke="#3890d8" stroke-width=".7"/><path d="M3 6.5h5" stroke="#20b0f0" stroke-width="1"/><path d="M3 8.8h5" stroke="#20b0f0" stroke-width="1"/><path d="M6 4.500c2.500-2 5.500-1.500 5.800 3" stroke="#102858" stroke-width="1" fill="none"/><path d="M9.800 6l2 2.500l2-2.500" stroke="#102858" stroke-width="1" fill="none"/><g transform="translate(10,8.8)"><ellipse cx="3.0" cy="5.8999999999999995" rx="3.0" ry="1.100" fill="#ffe000" stroke="#3e2600" stroke-width=".9"/><path d="M1.8 5.6h2" stroke="#fffcc0" stroke-width=".7"/><ellipse cx="3.0" cy="3.5999999999999996" rx="3.0" ry="1.100" fill="#ffe000" stroke="#3e2600" stroke-width=".9"/><path d="M1.8 3.3h2" stroke="#fffcc0" stroke-width=".7"/><ellipse cx="3.0" cy="1.3" rx="3.0" ry="1.100" fill="#ffe000" stroke="#3e2600" stroke-width=".9"/><path d="M1.8 1.0h2" stroke="#fffcc0" stroke-width=".7"/></g></svg>
<svg class="i" style="left:571px;top:53px" width="16" height="16" viewBox="0 0 16 16"><path d="M4.5 0.5h8l3 3v9h-11z" fill="#fff" stroke="#3890d8"/><path d="M12.5 0.5v3h3" fill="none" stroke="#3890d8" stroke-width=".7"/><path d="M6 6.1h7" stroke="#20b0f0" stroke-width="1"/><path d="M6 8.3h7" stroke="#20b0f0" stroke-width="1"/><g transform="translate(1,0)"><ellipse cx="2.7" cy="3.8" rx="2.7" ry="1.100" fill="#ffe000" stroke="#3e2600" stroke-width=".9"/><path d="M1.5000000000000002 3.5h2" stroke="#fffcc0" stroke-width=".7"/><ellipse cx="2.7" cy="1.3" rx="2.7" ry="1.100" fill="#ffe000" stroke="#3e2600" stroke-width=".9"/><path d="M1.5000000000000002 1.0h2" stroke="#fffcc0" stroke-width=".7"/></g><path d="M3.300 6v2c0 3 4 3.500 7.500 2.300" stroke="#102858" stroke-width="1" fill="none"/><path d="M1.300 8l2-2.300l2 2.300" stroke="#102858" stroke-width="1" fill="none"/></svg>
<svg class="i" style="left:594px;top:53px" width="16" height="16" viewBox="0 0 16 16"><path d="M4 15.500l6-12h6v12z" fill="#b4b4b4"/><path d="M10.500 4.500h4.500v10h-8z" fill="#dcdcdc"/><path d="M5.500 .2v8.600M1.200 4.500h8.600" stroke="#fff" stroke-width="3.600"/><path d="M5.500 .5v8M1.500 4.500h8" stroke="#14c014" stroke-width="2.500"/><g transform="translate(9,6)"><ellipse cx="3.0" cy="6.8999999999999995" rx="3.0" ry="1.100" fill="#ffe000" stroke="#3e2600" stroke-width=".9"/><path d="M1.8 6.6h2" stroke="#fffcc0" stroke-width=".7"/><ellipse cx="3.0" cy="4.1" rx="3.0" ry="1.100" fill="#ffe000" stroke="#3e2600" stroke-width=".9"/><path d="M1.8 3.8h2" stroke="#fffcc0" stroke-width=".7"/><ellipse cx="3.0" cy="1.3" rx="3.0" ry="1.100" fill="#ffe000" stroke="#3e2600" stroke-width=".9"/><path d="M1.8 1.0h2" stroke="#fffcc0" stroke-width=".7"/></g></svg>
<svg class="i" style="left:617px;top:53px" width="16" height="16" viewBox="0 0 16 16"><path d="M4 15.500l6-12h6v12z" fill="#b4b4b4"/><path d="M10.500 4.500h4.500v10h-8z" fill="#dcdcdc"/><path d="M1 4.400h9" stroke="#fff" stroke-width="3.600"/><path d="M1.300 4.400h8.400" stroke="#14c014" stroke-width="2.500"/><g transform="translate(9,6)"><ellipse cx="3.0" cy="6.8999999999999995" rx="3.0" ry="1.100" fill="#ffe000" stroke="#3e2600" stroke-width=".9"/><path d="M1.8 6.6h2" stroke="#fffcc0" stroke-width=".7"/><ellipse cx="3.0" cy="4.1" rx="3.0" ry="1.100" fill="#ffe000" stroke="#3e2600" stroke-width=".9"/><path d="M1.8 3.8h2" stroke="#fffcc0" stroke-width=".7"/><ellipse cx="3.0" cy="1.3" rx="3.0" ry="1.100" fill="#ffe000" stroke="#3e2600" stroke-width=".9"/><path d="M1.8 1.0h2" stroke="#fffcc0" stroke-width=".7"/></g></svg>
<svg class="i" style="left:640px;top:53px" width="16" height="16" viewBox="0 0 16 16"><path d="M1.5 0.5h7.5l3 3v9h-10.5z" fill="#fff" stroke="#3890d8"/><path d="M9.0 0.5v3h3" fill="none" stroke="#3890d8" stroke-width=".7"/><path d="M3 6.1h6.5" stroke="#20b0f0" stroke-width="1"/><path d="M3 8.3h6.5" stroke="#20b0f0" stroke-width="1"/><g transform="translate(1,10.3)"><ellipse cx="2.7" cy="3.9000000000000004" rx="2.7" ry="1.100" fill="#ffe000" stroke="#3e2600" stroke-width=".9"/><path d="M1.5000000000000002 3.6h2" stroke="#fffcc0" stroke-width=".7"/><ellipse cx="2.7" cy="1.3" rx="2.7" ry="1.100" fill="#ffe000" stroke="#3e2600" stroke-width=".9"/><path d="M1.5000000000000002 1.0h2" stroke="#fffcc0" stroke-width=".7"/></g><path d="M8.600 7.200l3 2.600l4.400-6" stroke="#12c43c" stroke-width="2.400" fill="none"/></svg>
<svg class="i" style="left:663px;top:53px" width="16" height="16" viewBox="0 0 16 16"><path d="M1.5 0.5h7l3 3v9h-10z" fill="#fff" stroke="#3890d8"/><path d="M8.5 0.5v3h3" fill="none" stroke="#3890d8" stroke-width=".7"/><g transform="translate(4,4.3)"><ellipse cx="2.9" cy="9.7" rx="2.9" ry="1.100" fill="#ffe000" stroke="#3e2600" stroke-width=".9"/><path d="M1.7 9.399999999999999h2" stroke="#fffcc0" stroke-width=".7"/><ellipse cx="2.9" cy="6.8999999999999995" rx="2.9" ry="1.100" fill="#ffe000" stroke="#3e2600" stroke-width=".9"/><path d="M1.7 6.6h2" stroke="#fffcc0" stroke-width=".7"/><ellipse cx="2.9" cy="4.1" rx="2.9" ry="1.100" fill="#ffe000" stroke="#3e2600" stroke-width=".9"/><path d="M1.7 3.8h2" stroke="#fffcc0" stroke-width=".7"/><ellipse cx="2.9" cy="1.3" rx="2.9" ry="1.100" fill="#ffe000" stroke="#3e2600" stroke-width=".9"/><path d="M1.7 1.0h2" stroke="#fffcc0" stroke-width=".7"/></g><g transform="translate(11.3,10)"><ellipse cx="2.7" cy="4.1" rx="2.7" ry="1.100" fill="#ffe000" stroke="#3e2600" stroke-width=".9"/><path d="M1.5000000000000002 3.8h2" stroke="#fffcc0" stroke-width=".7"/><ellipse cx="2.7" cy="1.3" rx="2.7" ry="1.100" fill="#ffe000" stroke="#3e2600" stroke-width=".9"/><path d="M1.5000000000000002 1.0h2" stroke="#fffcc0" stroke-width=".7"/></g></svg>
<svg class="i" style="left:686px;top:53px" width="16" height="16" viewBox="0 0 16 16"><path d="M1.5 0.5h7l3 3v9h-10z" fill="#fff" stroke="#3890d8"/><path d="M8.5 0.5v3h3" fill="none" stroke="#3890d8" stroke-width=".7"/><path d="M3 6.5h6" stroke="#20b0f0" stroke-width="1"/><path d="M3 8.7h6" stroke="#20b0f0" stroke-width="1"/><path d="M7.500 15.500l9-8" stroke="#18b818" stroke-width="1.600"/><circle cx="10.500" cy="9" r="1.700" fill="#18b818"/><circle cx="15" cy="13.800" r="1.700" fill="#18b818"/></svg>
<svg class="i" style="left:709px;top:53px" width="16" height="16" viewBox="0 0 16 16"><path d="M1.5 0.5h6.5l3 3v8.5h-9.5z" fill="#fff" stroke="#3890d8"/><path d="M8.0 0.5v3h3" fill="none" stroke="#3890d8" stroke-width=".7"/><path d="M3 6.1h5.5" stroke="#20b0f0" stroke-width="1"/><path d="M3 8.3h5.5" stroke="#20b0f0" stroke-width="1"/><g transform="translate(12.6,2.8) scale(0.85)"><path d="M-4.400 10.500v-3.300c0-1.700 1.600-2.500 4.400-2.500s4.400.8 4.400 2.500v3.300z" fill="#f02030"/><path d="M-3.400 6.400c.8-1 2-1.200 3.400-1.200s2.600.2 3.400 1.200c-1.500-.5-5.300-.5-6.800 0z" fill="#ff7078"/><path d="M-1.300 4.700l1.300 1.900l1.300-1.900z" fill="#fff"/><circle cx="0" cy="2.400" r="2.400" fill="#5e1414"/><ellipse cx="0" cy="2.900" rx="1.700" ry="1.700" fill="#ffd9bc"/></g><g transform="translate(9.5,6) scale(1.0)"><path d="M-4.400 10.500v-3.300c0-1.700 1.600-2.500 4.400-2.500s4.400.8 4.400 2.500v3.300z" fill="#2050e0"/><path d="M-3.400 6.400c.8-1 2-1.200 3.400-1.200s2.600.2 3.400 1.200c-1.500-.5-5.300-.5-6.800 0z" fill="#6090ff"/><path d="M-1.300 4.700l1.300 1.900l1.300-1.900z" fill="#fff"/><circle cx="0" cy="2.400" r="2.400" fill="#5e1414"/><ellipse cx="0" cy="2.900" rx="1.700" ry="1.700" fill="#ffd9bc"/></g></svg>
<svg class="i" style="left:733px;top:53px" width="16" height="16" viewBox="0 0 16 16"><rect x="2.500" y="0.500" width="11.500" height="14.300" rx="2.200" fill="#38c438" stroke="#1c7c1c"/><path d="M6 5v7h3M6 8h3" stroke="#14506c" stroke-width="1" fill="none"/><rect x="4.800" y="2.500" width="2.400" height="2.400" fill="#58d468" stroke="#2464a4" stroke-width=".7"/><rect x="9" y="6.800" width="2.800" height="2.400" fill="#58d468" stroke="#2464a4" stroke-width=".7"/><rect x="9" y="10.800" width="2.800" height="2.400" fill="#58d468" stroke="#2464a4" stroke-width=".7"/></svg>
<svg class="i" style="left:755px;top:66px" width="7" height="4" viewBox="0 0 7 4"><path d="M0 0H7L3.5 4Z" fill="#3b2a05"/></svg>
<div class="grip" style="left:772px;top:54px;height:14px"><i style="top:0px"></i><i style="top:2px"></i><i style="top:4px"></i><i style="top:6px"></i><i style="top:8px"></i><i style="top:10px"></i><i style="top:12px"></i></div>
<svg class="i" style="left:780px;top:53px" width="16" height="16" viewBox="0 0 16 16"><path d="M0.500 0.500h7.500l3 3v9h-10.500z" fill="#fcfcfc" stroke="#b0b0b0"/><path d="M8 0.500v3h3" fill="#e0e0e0" stroke="#b0b0b0" stroke-width=".7"/><path d="M0.500 13.500h11" stroke="#888" stroke-width="1"/><text x="1.800" y="10.300" font-family="Liberation Sans,sans-serif" font-size="9.300" fill="#242424">Σ</text><g transform="translate(11,0) scale(0.95)"><path d="M-4.400 10.500v-3.300c0-1.700 1.600-2.500 4.400-2.500s4.400.8 4.400 2.500v3.300z" fill="#2050e0"/><path d="M-3.400 6.400c.8-1 2-1.200 3.400-1.200s2.600.2 3.400 1.200c-1.500-.5-5.300-.5-6.800 0z" fill="#6090ff"/><path d="M-1.300 4.700l1.300 1.900l1.300-1.900z" fill="#fff"/><circle cx="0" cy="2.400" r="2.400" fill="#5e1414"/><ellipse cx="0" cy="2.900" rx="1.700" ry="1.700" fill="#ffd9bc"/></g><g transform="translate(9,9.5)"><path d="M0 1.500l1.500-1.500h5v5l-1.500 1.500z" fill="#a00818"/><path d="M0 1.500h5v5h-5z" fill="#f01828"/><path d="M0 1.500l1.500-1.500h5l-1.500 1.500z" fill="#ff7080"/></g></svg>
<svg class="i" style="left:803px;top:53px" width="16" height="16" viewBox="0 0 16 16"><path d="M0.500 0.500h7.500l3 3v9h-10.500z" fill="#fcfcfc" stroke="#b0b0b0"/><path d="M8 0.500v3h3" fill="#e0e0e0" stroke="#b0b0b0" stroke-width=".7"/><path d="M0.500 13.500h11" stroke="#888" stroke-width="1"/><text x="1.800" y="10.300" font-family="Liberation Sans,sans-serif" font-size="9.300" fill="#242424">Σ</text><g transform="translate(11,0) scale(0.95)"><path d="M-4.400 10.500v-3.300c0-1.700 1.600-2.500 4.400-2.500s4.400.8 4.400 2.500v3.300z" fill="#f02030"/><path d="M-3.400 6.400c.8-1 2-1.200 3.400-1.200s2.600.2 3.400 1.200c-1.500-.5-5.300-.5-6.800 0z" fill="#ff7078"/><path d="M-1.300 4.700l1.300 1.900l1.300-1.900z" fill="#fff"/><circle cx="0" cy="2.400" r="2.400" fill="#5e1414"/><ellipse cx="0" cy="2.900" rx="1.700" ry="1.700" fill="#ffd9bc"/></g><g transform="translate(9,9.5)"><path d="M0 1.500l1.500-1.500h5v5l-1.500 1.500z" fill="#0a1890"/><path d="M0 1.500h5v5h-5z" fill="#1830e0"/><path d="M0 1.500l1.500-1.500h5l-1.500 1.500z" fill="#6080ff"/></g></svg>
<svg class="i" style="left:826px;top:53px" width="16" height="16" viewBox="0 0 16 16"><path d="M0.500 0.500h7.500l3 3v9h-10.500z" fill="#fcfcfc" stroke="#b0b0b0"/><path d="M8 0.500v3h3" fill="#e0e0e0" stroke="#b0b0b0" stroke-width=".7"/><path d="M0.500 13.500h11" stroke="#888" stroke-width="1"/><text x="1.800" y="10.300" font-family="Liberation Sans,sans-serif" font-size="9.300" fill="#242424">Σ</text><g transform="translate(12,2.5) scale(0.85)"><path d="M-4.400 10.500v-3.300c0-1.700 1.600-2.500 4.400-2.500s4.400.8 4.400 2.500v3.300z" fill="#2a60d8"/><path d="M-3.400 6.400c.8-1 2-1.200 3.400-1.200s2.600.2 3.400 1.200c-1.500-.5-5.300-.5-6.800 0z" fill="#6090ff"/><path d="M-1.300 4.700l1.300 1.900l1.300-1.900z" fill="#fff"/><circle cx="0" cy="2.400" r="2.400" fill="#5e1414"/><ellipse cx="0" cy="2.900" rx="1.700" ry="1.700" fill="#ffd9bc"/></g><g transform="translate(8.5,5.5) scale(1.0)"><path d="M-4.400 10.500v-3.300c0-1.700 1.600-2.500 4.400-2.500s4.400.8 4.400 2.500v3.300z" fill="#f02030"/><path d="M-3.400 6.400c.8-1 2-1.200 3.400-1.200s2.600.2 3.400 1.200c-1.500-.5-5.300-.5-6.800 0z" fill="#ff7078"/><path d="M-1.300 4.700l1.300 1.900l1.300-1.900z" fill="#fff"/><circle cx="0" cy="2.400" r="2.400" fill="#5e1414"/><ellipse cx="0" cy="2.900" rx="1.700" ry="1.700" fill="#ffd9bc"/></g></svg>
<svg class="i" style="left:849px;top:53px" width="16" height="16" viewBox="0 0 16 16"><path d="M0.500 0.500h7.500l3 3v9h-10.500z" fill="#fcfcfc" stroke="#b0b0b0"/><path d="M8 0.500v3h3" fill="#e0e0e0" stroke="#b0b0b0" stroke-width=".7"/><path d="M0.500 13.500h11" stroke="#888" stroke-width="1"/><text x="1.800" y="10.300" font-family="Liberation Sans,sans-serif" font-size="9.300" fill="#242424">Σ</text><g transform="translate(10,1.5)"><path d="M0 1.500l1.500-1.500h5v5l-1.500 1.500z" fill="#a00818"/><path d="M0 1.500h5v5h-5z" fill="#f01828"/><path d="M0 1.500l1.500-1.500h5l-1.500 1.500z" fill="#ff7080"/></g><g transform="translate(7,11.5)"><path d="M0 1.200l1.200-1.200h7.8v2.800l-1.200 1.200h-7.8z" fill="#181858"/><path d="M0 1.200h7.8v2.800h-7.8z" fill="#3010c8"/><path d="M0 1.200l1.200-1.200h7.8l-1.200 1.200z" fill="#3010c8" opacity=".7"/><path d="M1.300 2.600h1.300M3.600 2.600h1.300M5.900 2.600h1.300" stroke="#ffe040" stroke-width="1.200"/></g></svg>
<svg class="i" style="left:872px;top:53px" width="16" height="16" viewBox="0 0 16 16"><path d="M0.500 0.500h7.500l3 3v9h-10.500z" fill="#fcfcfc" stroke="#b0b0b0"/><path d="M8 0.500v3h3" fill="#e0e0e0" stroke="#b0b0b0" stroke-width=".7"/><path d="M0.500 13.500h11" stroke="#888" stroke-width="1"/><text x="1.800" y="10.300" font-family="Liberation Sans,sans-serif" font-size="9.300" fill="#242424">Σ</text><g transform="translate(10,0.5)"><path d="M0 1.500l1.500-1.500h5v5l-1.500 1.500z" fill="#a00818"/><path d="M0 1.500h5v5h-5z" fill="#f01828"/><path d="M0 1.500l1.500-1.500h5l-1.500 1.500z" fill="#ff7080"/></g><g transform="translate(9,11.5)"><path d="M0 1.200l1.200-1.200h5.8v2.800l-1.200 1.200h-5.8z" fill="#703810"/><path d="M0 1.200h5.8v2.800h-5.8z" fill="#f08838"/><path d="M0 1.200l1.200-1.200h5.8l-1.200 1.200z" fill="#f08838" opacity=".7"/><path d="M1.300 2.600h1.300M3.600 2.600h1.300M5.900 2.600h1.300" stroke="#3a2008" stroke-width="1.200"/></g></svg>
<svg class="i" style="left:895px;top:53px" width="16" height="16" viewBox="0 0 16 16"><path d="M0.500 0.500h7.500l3 3v9h-10.500z" fill="#fcfcfc" stroke="#b0b0b0"/><path d="M8 0.500v3h3" fill="#e0e0e0" stroke="#b0b0b0" stroke-width=".7"/><path d="M0.500 13.500h11" stroke="#888" stroke-width="1"/><text x="1.800" y="10.300" font-family="Liberation Sans,sans-serif" font-size="9.300" fill="#242424">Σ</text><g transform="translate(10,3.5)"><path d="M0 1.500l1.500-1.500h5v5l-1.500 1.500z" fill="#a00818"/><path d="M0 1.500h5v5h-5z" fill="#f01828"/><path d="M0 1.500l1.500-1.500h5l-1.500 1.500z" fill="#ff7080"/></g><g transform="translate(7,11.5)"><path d="M0 1.200l1.200-1.200h7.8v2.800l-1.200 1.200h-7.8z" fill="#1848a8"/><path d="M0 1.200h7.8v2.800h-7.8z" fill="#3890f0"/><path d="M0 1.200l1.200-1.200h7.8l-1.200 1.200z" fill="#3890f0" opacity=".7"/><path d="M1.300 2.600h1.300M3.600 2.600h1.300M5.900 2.600h1.300" stroke="#ffffff" stroke-width="1.200"/></g></svg>
<svg class="i" style="left:918px;top:53px" width="16" height="16" viewBox="0 0 16 16"><path d="M0.500 0.500h7.500l3 3v9h-10.500z" fill="#dcdcdc" stroke="#a8a8a8"/><text x="1.800" y="10.300" font-family="Liberation Sans,sans-serif" font-size="9.500" fill="#282828">Σ</text><rect x="7.500" y="5.500" width="7" height="10" fill="#f4f4f4" stroke="#787878"/><path d="M8.500 7.500h5M8.500 9.500h5M8.500 11.500h5M8.500 13.500h5" stroke="#8c8c8c" stroke-width="1"/><path d="M6.500 15.500h9" stroke="#606060" stroke-width="1"/></svg>
<svg class="i" style="left:941px;top:53px" width="16" height="16" viewBox="0 0 16 16"><path d="M0.500 0.500h7.500l3 3v9h-10.500z" fill="#fcfcfc" stroke="#b0b0b0"/><path d="M8 0.500v3h3" fill="#e0e0e0" stroke="#b0b0b0" stroke-width=".7"/><path d="M0.500 13.500h11" stroke="#888" stroke-width="1"/><text x="1.800" y="10.300" font-family="Liberation Sans,sans-serif" font-size="9.300" fill="#242424">Σ</text><path d="M8.500 8.300l2.500 2.700l4.300-5.300" stroke="#0c7c24" stroke-width="3" fill="none"/><path d="M8.500 8.300l2.500 2.700l4.300-5.300" stroke="#14cc40" stroke-width="1.800" fill="none"/></svg>
<svg class="i" style="left:963px;top:66px" width="7" height="4" viewBox="0 0 7 4"><path d="M0 0H7L3.5 4Z" fill="#3b2a05"/></svg>
</div>
<div class="g" id="window-title">
<div style="left:0px;top:73px;width:1275px;height:1px;background:#d8d3c8"></div>
<div style="left:0px;top:74px;width:1275px;height:1px;background:#8e8e8e"></div>
<div style="left:0px;top:75px;width:1275px;height:1px;background:#6a6a6a"></div>
<div style="left:0px;top:76px;width:1275px;height:18px;background:#cccccc"></div>
<div style="left:0px;top:94px;width:1275px;height:1px;background:#6e6e6e"></div>
<div style="left:1275px;top:74px;width:2px;height:854px;background:#ffffff"></div>
<svg class="i" style="left:1px;top:77px" width="16" height="16" viewBox="0 0 16 16"><rect x="0.500" y="0.500" width="13" height="14" fill="#fff" stroke="#8e9db5"/><path d="M5.500 3.500h5M2.500 5.500h9M2.500 7.500h9M2.500 9.500h9M2.500 11.500h9" stroke="#b9c7da" stroke-width="1"/></svg>
<div class="t" style="left:20px;top:78px;font-weight:bold;font-size:12px;letter-spacing:0.09px;color:#262626;line-height:15px">Установка скидок номенклатуры: по номенклатуре. Новый *</div>
<svg class="i" style="left:1218px;top:77px" width="56" height="15" viewBox="0 0 56 15"><path d="M3 11.5h8" stroke="#222" stroke-width="2" fill="none"/><path d="M21.5 6.5h8v6h-8zM24.500 6v-3.500h7.500v6.500h-2.500" stroke="#222" stroke-width="1.2" fill="none"/><path d="M24.5 2.500h7.500" stroke="#222" stroke-width="2"/><path d="M43.500 3.500l8 8M51.500 3.500l-8 8" stroke="#222" stroke-width="2" fill="none"/></svg>
</div>
<div class="g" id="command-bar">
<div class="t" style="left:3px;top:101px;color:#4a3a10;letter-spacing:-0.25px">Операция</div>
<svg class="i" style="left:56px;top:106px" width="5" height="3" viewBox="0 0 5 3"><path d="M0 0H5L2.5 3Z" fill="#3b2a05"/></svg>
<div class="vs" style="left:67px;top:98px;height:18px"></div>
<div class="t" style="left:74px;top:101px;color:#4a3a10;letter-spacing:0.1px">Действия</div>
<svg class="i" style="left:127px;top:106px" width="5" height="3" viewBox="0 0 5 3"><path d="M0 0H5L2.5 3Z" fill="#3b2a05"/></svg>
<div class="vs" style="left:138px;top:98px;height:18px"></div>
<svg class="i" style="left:145px;top:100px" width="16" height="16" viewBox="0 0 16 16"><rect x="0.500" y="0.500" width="12" height="14" fill="#c9d5e1" stroke="#b5c3d1"/><path d="M2.500 3.500h8M2.500 5.500h8M2.500 7.500h8" stroke="#dbe4ed" stroke-width="1"/><path d="M4 11l4.500-3.500v2.300h7.500v2.400h-7.500v2.300z" fill="#a6bccd"/></svg>
<div class="vs" style="left:166px;top:98px;height:18px"></div>
<svg class="i" style="left:173px;top:100px" width="16" height="16" viewBox="0 0 16 16"><rect x="1.500" y="2.500" width="13" height="11" fill="#c3cdd8" stroke="#b7c2ce"/><path d="M1.500 3.500h13" stroke="#aebbc8" stroke-width="1.500"/><path d="M4.500 9a3.500 3 0 0 1 6-2M11.500 8a3.500 3 0 0 1-6 2" stroke="#9cc49a" stroke-width="1.400" fill="none"/><path d="M9.300 5.300l3 2.200l-3.300 1zM6.700 11.700l-3-2.200l3.300-1z" fill="#9cc49a"/></svg>
<svg class="i" style="left:196px;top:99px" width="16" height="16" viewBox="0 0 16 16"><path d="M1.5 0.5h6l3 3v8h-9z" fill="#f4f8fc" stroke="#8fa3ba"/><path d="M7.5 0.5v3h3" fill="none" stroke="#8fa3ba" stroke-width=".8"/><path d="M3.5 2.5h6l3 3v9h-9z" fill="#ffffff" stroke="#8fa3ba"/><path d="M9.5 2.5v3h3" fill="none" stroke="#8fa3ba" stroke-width=".8"/><path d="M5 7.5h6" stroke="#c9d6e4" stroke-width="1"/><path d="M5 9.5h6" stroke="#c9d6e4" stroke-width="1"/><defs><radialGradient id="g5" cx=".4" cy=".3" r=".8"><stop offset="0" stop-color="#a8e890"/><stop offset="1" stop-color="#3a9a30"/></radialGradient></defs><circle cx="11" cy="11.500" r="4.300" fill="url(#g5)" stroke="#8a9a8a" stroke-width=".8"/><path d="M11 9v5M8.500 11.500h5" stroke="#fff" stroke-width="1.700"/></svg>
<div class="vs" style="left:217px;top:98px;height:18px"></div>
<svg class="i" style="left:224px;top:99px" width="16" height="16" viewBox="0 0 16 16"><path d="M0.5 1.5h6l3 3v8h-9z" fill="#f4f8fc" stroke="#7d9bbf"/><path d="M6.5 1.5v3h3" fill="none" stroke="#7d9bbf" stroke-width=".8"/><path d="M2 5.5h6" stroke="#a9bdd2" stroke-width="1"/><path d="M2 7.5h6" stroke="#a9bdd2" stroke-width="1"/><path d="M2 9.5h6" stroke="#a9bdd2" stroke-width="1"/><g transform="translate(6.5,8.5)"><ellipse cx="2.8" cy="6.5" rx="2.8" ry="1.100" fill="#ffe000" stroke="#3e2600" stroke-width=".9"/><path d="M1.5999999999999999 6.2h2" stroke="#fffcc0" stroke-width=".7"/><ellipse cx="2.8" cy="3.9000000000000004" rx="2.8" ry="1.100" fill="#ffe000" stroke="#3e2600" stroke-width=".9"/><path d="M1.5999999999999999 3.6h2" stroke="#fffcc0" stroke-width=".7"/><ellipse cx="2.8" cy="1.3" rx="2.8" ry="1.100" fill="#ffe000" stroke="#3e2600" stroke-width=".9"/><path d="M1.5999999999999999 1.0h2" stroke="#fffcc0" stroke-width=".7"/></g><path d="M6 2.500c3-1.500 5.500-1 5.500 2" stroke="#18a028" stroke-width="1.800" fill="none"/><path d="M8.500 4l3 4l3-4z" fill="#18a028"/></svg>
<svg class="i" style="left:247px;top:99px" width="16" height="16" viewBox="0 0 16 16"><rect x="0.500" y="0.500" width="11" height="12" fill="#c3d1df" stroke="#b3c3d3"/><path d="M2.500 5.500h7M2.500 7.500h7M2.500 9.500h7" stroke="#d9e2eb"/><path d="M9 4.500c-3-1-5 0-5 0l1.500-2.500M4 4.500l2.500 1.500" stroke="#d9a9a4" stroke-width="1.600" fill="none"/><ellipse cx="10.500" cy="13.500" rx="3.800" ry="1.500" fill="#c9c7bb" stroke="#b5b3a5" stroke-width=".6"/><ellipse cx="10.500" cy="11.500" rx="3.800" ry="1.500" fill="#d3d1c5" stroke="#b5b3a5" stroke-width=".6"/><ellipse cx="10.500" cy="9.500" rx="3.800" ry="1.500" fill="#dbd9cf" stroke="#b5b3a5" stroke-width=".6"/></svg>
<div class="vs" style="left:268px;top:98px;height:18px"></div>
<svg class="i" style="left:275px;top:99px" width="16" height="16" viewBox="0 0 16 16"><path d="M1.5 0.5h5l3 3v7h-8z" fill="#f4f6f8" stroke="#888e96"/><path d="M6.5 0.5v3h3" fill="none" stroke="#888e96" stroke-width=".8"/><path d="M5.5 3.5h6l3 3v8h-9z" fill="#ffffff" stroke="#7890a8"/><path d="M11.5 3.5v3h3" fill="none" stroke="#7890a8" stroke-width=".8"/><path d="M2.500 6.500c3 0 4 .5 5 1.500v-2.500l5.500 4.500l-5.500 4.500v-2.500c-1.500-1.500-3-2.500-5-5.500z" fill="#2a68b8" stroke="#1a3a70" stroke-width=".5"/></svg>
<svg class="i" style="left:293px;top:106px" width="5" height="3" viewBox="0 0 5 3"><path d="M0 0H5L2.5 3Z" fill="#3b2a05"/></svg>
<div class="vs" style="left:302px;top:98px;height:18px"></div>
<div class="t" style="left:310px;top:101px;color:#4a3a10">Перейти</div>
<svg class="i" style="left:357px;top:106px" width="5" height="3" viewBox="0 0 5 3"><path d="M0 0H5L2.5 3Z" fill="#3b2a05"/></svg>
<div class="vs" style="left:367px;top:98px;height:18px"></div>
<svg class="i" style="left:373px;top:99px" width="16" height="16" viewBox="0 0 16 16"><defs><radialGradient id="g6" cx=".45" cy=".3" r=".8"><stop offset="0" stop-color="#fff6e0"/><stop offset=".55" stop-color="#f8cc78"/><stop offset="1" stop-color="#e09a38"/></radialGradient></defs><circle cx="8" cy="8" r="7.300" fill="url(#g6)" stroke="#a89078" stroke-width=".9"/><text x="8" y="12.300" text-anchor="middle" font-family="Liberation Sans,sans-serif" font-weight="bold" font-size="12" fill="#7a4a20">?</text></svg>
<svg class="i" style="left:396px;top:99px" width="16" height="16" viewBox="0 0 16 16"><g fill="#fff" stroke="#8a8a8a" stroke-width="1"><rect x="0.500" y="0.500" width="15" height="4"/><rect x="0.500" y="5.500" width="15" height="4"/><rect x="0.500" y="10.500" width="15" height="4"/></g><g fill="#b8b8b8"><rect x="11.500" y="1" width="3.500" height="3"/><rect x="11.500" y="6" width="3.500" height="3"/><rect x="11.500" y="11" width="3.500" height="3"/></g><path d="M12 1.500h2.500l-1.250 1.800zM12 6.500h2.500l-1.250 1.800zM12 11.500h2.500l-1.250 1.800z" fill="#202020"/></svg>
<svg class="i" style="left:419px;top:99px" width="16" height="16" viewBox="0 0 16 16"><rect x="0.500" y="0.500" width="5" height="5" fill="#fff" stroke="#8a8a8a"/><rect x="0.500" y="8.500" width="5" height="5" fill="#fff" stroke="#8a8a8a"/><path d="M1.200 2.800l1.500 1.700l2.500-3.500" stroke="#000" stroke-width="1.400" fill="none"/><path d="M8 1h8M8 9h8" stroke="#1c50d8" stroke-width="2"/><path d="M8 4h3M8 12h4" stroke="#1c50d8" stroke-width="2"/></svg>
</div>
<div class="g" id="form">
<div style="left:0px;top:119px;width:1275px;height:1px;background:#b9b292"></div>
<div style="left:0px;top:120px;width:1275px;height:781px;background:#fffbf0"></div>
<div style="left:0px;top:901px;width:1275px;height:1px;background:#b9b292"></div>
<div class="t" style="left:7px;top:132px;color:#1a1a1a">Номер:</div>
<div style="left:93px;top:128px;width:255px;height:19px;background:#fff;border:1px solid #aca685;box-sizing:border-box"></div>
<div style="left:94px;top:129px;width:253px;height:17px;border:2px solid #fff;box-sizing:border-box;background:#fffbf0"></div>
<div class="t" style="left:349px;top:132px;color:#1a1a1a">от:</div>
<div style="left:367px;top:128px;width:260px;height:19px;background:#fff;border:1px solid #aca685;box-sizing:border-box"></div>
<div style="left:611px;top:128px;width:16px;height:19px;background:#ece6d9;border:1px solid #aca685;box-sizing:border-box"></div>
<svg class="i" style="left:614px;top:132px" width="11" height="11" viewBox="0 0 11 11"><path d="M2.500 0.500h8v8h-8z" fill="#ece6d9" stroke="#5a4304"/><path d="M0.500 2.500h8v8h-8z" fill="#ece6d9" stroke="#5a4304"/><path d="M0.500 4.500h8M0.500 6.500h8M0.500 8.500h8M3.500 2.500v8M6 2.500v8" stroke="#5a4304" stroke-width="1"/></svg>
<div class="t" style="left:370px;top:132px;">21.04.2016&nbsp; 0:00:00</div>
<div class="t" style="left:7px;top:156px;color:#1a1a1a">Скидка с:</div>
<div style="left:93px;top:152px;width:255px;height:19px;background:#fff;border:1px solid #aca685;box-sizing:border-box"></div>
<div style="left:332px;top:152px;width:16px;height:19px;background:#ece6d9;border:1px solid #aca685;box-sizing:border-box"></div>
<svg class="i" style="left:335px;top:156px" width="11" height="11" viewBox="0 0 11 11"><path d="M2.500 0.500h8v8h-8z" fill="#ece6d9" stroke="#5a4304"/><path d="M0.500 2.500h8v8h-8z" fill="#ece6d9" stroke="#5a4304"/><path d="M0.500 4.500h8M0.500 6.500h8M0.500 8.500h8M3.500 2.500v8M6 2.500v8" stroke="#5a4304" stroke-width="1"/></svg>
<div class="t" style="left:96px;top:156px;">&nbsp; .&nbsp; .</div>
<div style="left:96px;top:168px;width:234px;height:1px;border-top:1px dotted #e02020;height:0"></div>
<div class="t" style="left:349px;top:156px;color:#1a1a1a">по:</div>
<div style="left:367px;top:152px;width:260px;height:19px;background:#fff;border:1px solid #aca685;box-sizing:border-box"></div>
<div style="left:611px;top:152px;width:16px;height:19px;background:#ece6d9;border:1px solid #aca685;box-sizing:border-box"></div>
<svg class="i" style="left:615px;top:157px" width="9" height="9" viewBox="0 0 9 9"><path d="M1 1L8 8M8 1L1 8" stroke="#5a4304" stroke-width="1.8" fill="none"/></svg>
<div style="left:596px;top:152px;width:16px;height:19px;background:#ece6d9;border:1px solid #aca685;box-sizing:border-box"></div>
<svg class="i" style="left:599px;top:156px" width="11" height="11" viewBox="0 0 11 11"><path d="M2.500 0.500h8v8h-8z" fill="#ece6d9" stroke="#5a4304"/><path d="M0.500 2.500h8v8h-8z" fill="#ece6d9" stroke="#5a4304"/><path d="M0.500 4.500h8M0.500 6.500h8M0.500 8.500h8M3.500 2.500v8M6 2.500v8" stroke="#5a4304" stroke-width="1"/></svg>
<div class="t" style="left:370px;top:156px;">&nbsp; .&nbsp; .</div>
<div class="t" style="left:7px;top:180px;color:#1a1a1a">Условие:</div>
<div style="left:93px;top:176px;width:534px;height:19px;background:#fff;border:1px solid #aca685;box-sizing:border-box"></div>
<div style="left:611px;top:176px;width:16px;height:19px;background:#ece6d9;border:1px solid #aca685;box-sizing:border-box"></div>
<svg class="i" style="left:616px;top:184px" width="7" height="4" viewBox="0 0 7 4"><path d="M0 0H7L3.5 4Z" fill="#5a4304"/></svg>
<div class="t" style="left:96px;top:180px;">Без условий</div>
<div class="t" style="left:647px;top:132px;color:#1a1a1a">Валюта:</div>
<div style="left:719px;top:128px;width:540px;height:19px;background:#fff;border:1px solid #aca685;box-sizing:border-box"></div>
<div style="left:1243px;top:128px;width:16px;height:19px;background:#ece6d9;border:1px solid #aca685;box-sizing:border-box"></div>
<svg class="i" style="left:1246px;top:131px" width="11" height="12" viewBox="0 0 11 12"><circle cx="4.500" cy="4.500" r="3.300" stroke="#5a4304" stroke-width="1.200" fill="none"/><path d="M7 7.300L10 10.800" stroke="#5a4304" stroke-width="1.800"/></svg>
<div style="left:1228px;top:128px;width:16px;height:19px;background:#ece6d9;border:1px solid #aca685;box-sizing:border-box"></div>
<svg class="i" style="left:1231px;top:141px" width="10" height="2" viewBox="0 0 10 2" shape-rendering="crispEdges"><path d="M0 0h2v2h-2zM4 0h2v2h-2zM8 0h2v2h-2z" fill="#5a4304"/></svg>
<div class="t" style="left:722px;top:132px;">RUB</div>
<div class="t" style="left:647px;top:156px;color:#1a1a1a">Вид скидки:</div>
<div style="left:719px;top:152px;width:540px;height:19px;background:#fff;border:1px solid #aca685;box-sizing:border-box"></div>
<div style="left:1243px;top:152px;width:16px;height:19px;background:#ece6d9;border:1px solid #aca685;box-sizing:border-box"></div>
<svg class="i" style="left:1246px;top:165px" width="10" height="2" viewBox="0 0 10 2" shape-rendering="crispEdges"><path d="M0 0h2v2h-2zM4 0h2v2h-2zM8 0h2v2h-2z" fill="#5a4304"/></svg>
<div style="left:722px;top:155px;width:54px;height:14px;background:#4f66c1"></div>
<div class="t" style="left:723px;top:156px;color:#fff">Розничная</div>
<div class="t" style="left:647px;top:180px;color:#1a1a1a">Тип скидки:</div>
<div style="left:719px;top:176px;width:540px;height:19px;background:#fff;border:1px solid #aca685;box-sizing:border-box"></div>
<div style="left:1243px;top:176px;width:16px;height:19px;background:#ece6d9;border:1px solid #aca685;box-sizing:border-box"></div>
<svg class="i" style="left:1246px;top:179px" width="11" height="12" viewBox="0 0 11 12"><circle cx="4.500" cy="4.500" r="3.300" stroke="#5a4304" stroke-width="1.200" fill="none"/><path d="M7 7.300L10 10.800" stroke="#5a4304" stroke-width="1.800"/></svg>
<div style="left:1228px;top:176px;width:16px;height:19px;background:#ece6d9;border:1px solid #aca685;box-sizing:border-box"></div>
<svg class="i" style="left:1232px;top:181px" width="9" height="9" viewBox="0 0 9 9"><path d="M1 1L8 8M8 1L1 8" stroke="#5a4304" stroke-width="1.8" fill="none"/></svg>
<div style="left:1213px;top:176px;width:16px;height:19px;background:#ece6d9;border:1px solid #aca685;box-sizing:border-box"></div>
<svg class="i" style="left:1216px;top:189px" width="10" height="2" viewBox="0 0 10 2" shape-rendering="crispEdges"><path d="M0 0h2v2h-2zM4 0h2v2h-2zM8 0h2v2h-2z" fill="#5a4304"/></svg>
<div style="left:13px;top:234px;width:13px;height:13px;border:1px solid #8e8f8f;border-radius:3px;background:#fff;box-sizing:border-box"></div>
<div class="t" style="left:28px;top:235px;color:#1a1a1a">Для всей номенклатуры</div>
<div style="left:161px;top:234px;width:13px;height:13px;border:1px solid #8e8f8f;border-radius:3px;background:#fff;box-sizing:border-box"></div>
<svg class="i" style="left:163px;top:236px" width="9" height="9" viewBox="0 0 9 9"><path d="M1.200 4.200L3.600 7L7.800 1.500" stroke="#222" stroke-width="1.600" fill="none"/></svg>
<div class="t" style="left:176px;top:235px;color:#1a1a1a">Для всех получателей</div>
<div style="left:304px;top:234px;width:13px;height:13px;border:1px solid #8e8f8f;border-radius:3px;background:#fff;box-sizing:border-box"></div>
<div class="t" style="left:319px;top:235px;color:#1a1a1a">По дням недели</div>
<div class="t" style="left:7px;top:257px;font-weight:bold;color:#a06208;letter-spacing:0.42px;-webkit-text-stroke:0.3px #a06208">Значения по умолчанию для таблицы товаров и ценовых групп</div>
<div style="left:7px;top:270px;width:1260px;height:1px;background:#ab9d70"></div>
<div class="t" style="left:13px;top:281px;color:#1a1a1a">Качество:</div>
<div style="left:71px;top:277px;width:512px;height:19px;background:#fff;border:1px solid #aca685;box-sizing:border-box"></div>
<div style="left:567px;top:277px;width:16px;height:19px;background:#ece6d9;border:1px solid #aca685;box-sizing:border-box"></div>
<svg class="i" style="left:570px;top:290px" width="10" height="2" viewBox="0 0 10 2" shape-rendering="crispEdges"><path d="M0 0h2v2h-2zM4 0h2v2h-2zM8 0h2v2h-2z" fill="#5a4304"/></svg>
<div class="t" style="left:74px;top:281px;">Новый</div>
<div class="t" style="left:590px;top:281px;color:#1a1a1a">Процент:</div>
<div style="left:643px;top:277px;width:16px;height:19px;background:#ece6d9;border:1px solid #aca685;box-sizing:border-box"></div>
<svg class="i" style="left:646px;top:290px" width="10" height="2" viewBox="0 0 10 2" shape-rendering="crispEdges"><path d="M0 0h2v2h-2zM4 0h2v2h-2zM8 0h2v2h-2z" fill="#5a4304"/></svg>
<div style="left:658px;top:277px;width:165px;height:19px;background:#fff;border:1px solid #aca685;box-sizing:border-box"></div>
<div style="left:807px;top:277px;width:16px;height:19px;background:#ece6d9;border:1px solid #aca685;box-sizing:border-box"></div>
<svg class="i" style="left:810px;top:281px" width="10" height="11" viewBox="0 0 10 11"><rect x="0.500" y="0.500" width="9" height="10" rx="1" fill="#f4efe0" stroke="#5a4304" stroke-width="1.100"/><path d="M1 3.500h8" stroke="#5a4304" stroke-width="1"/><path d="M2 5.500h1.500M4.250 5.500h1.500M6.500 5.500h1.500M2 7.500h1.500M4.250 7.500h1.500M6.500 7.500h1.500M2 9.200h1.500M4.250 9.200h1.500M6.500 9.200h1.500" stroke="#5a4304" stroke-width="1.100"/></svg>
<div class="t" style="left:658px;top:281px;width:148px;text-align:right;">0,00</div>
<div class="t" style="left:827px;top:281px;color:#1a1a1a">Ограничение (RUB):</div>
<div style="left:936px;top:277px;width:323px;height:19px;background:#fff;border:1px solid #aca685;box-sizing:border-box"></div>
<div style="left:1243px;top:277px;width:16px;height:19px;background:#ece6d9;border:1px solid #aca685;box-sizing:border-box"></div>
<svg class="i" style="left:1247px;top:282px" width="9" height="9" viewBox="0 0 9 9"><path d="M1 1L8 8M8 1L1 8" stroke="#5a4304" stroke-width="1.8" fill="none"/></svg>
<div style="left:1228px;top:277px;width:16px;height:19px;background:#ece6d9;border:1px solid #aca685;box-sizing:border-box"></div>
<svg class="i" style="left:1231px;top:281px" width="10" height="11" viewBox="0 0 10 11"><rect x="0.500" y="0.500" width="9" height="10" rx="1" fill="#f4efe0" stroke="#5a4304" stroke-width="1.100"/><path d="M1 3.500h8" stroke="#5a4304" stroke-width="1"/><path d="M2 5.500h1.500M4.250 5.500h1.500M6.500 5.500h1.500M2 7.500h1.500M4.250 7.500h1.500M6.500 7.500h1.500M2 9.200h1.500M4.250 9.200h1.500M6.500 9.200h1.500" stroke="#5a4304" stroke-width="1.100"/></svg>
<div class="t" style="left:936px;top:281px;width:291px;text-align:right;">0,00</div>
</div>
<div class="g" id="tab-goods">
<div style="left:7px;top:322px;width:1260px;height:523px;border:1px solid #aca685;box-sizing:border-box"></div>
<div style="left:7px;top:304px;width:52px;height:19px;border:1px solid #aca685;border-bottom:none;border-radius:3px 3px 0 0;background:#fffbf0;box-sizing:border-box"></div>
<div class="t" style="left:13px;top:308px;color:#1a1a1a">Товары</div>
<svg class="i" style="left:18px;top:327px" width="16" height="16" viewBox="0 0 16 16"><defs><radialGradient id="g7" cx=".4" cy=".25" r=".85"><stop offset="0" stop-color="#d8f4c4"/><stop offset=".6" stop-color="#84c868"/><stop offset="1" stop-color="#4c9a40"/></radialGradient></defs><circle cx="8" cy="8" r="7.300" fill="url(#g7)" stroke="#a4ac9c" stroke-width="1.300"/><path d="M8 4.200v7.600M4.200 8h7.600" stroke="#fff" stroke-width="2.200"/></svg>
<svg class="i" style="left:41px;top:327px" width="16" height="16" viewBox="0 0 16 16"><path d="M1.5 0.5h7l3 3v10h-10z" fill="#f6f9fc" stroke="#8fa3ba"/><path d="M8.5 0.5v3h3" fill="none" stroke="#8fa3ba" stroke-width=".8"/><path d="M3 4.5h7" stroke="#a9bdd2" stroke-width="1"/><path d="M3 6.5h7" stroke="#a9bdd2" stroke-width="1"/><path d="M3 8.5h7" stroke="#a9bdd2" stroke-width="1"/><defs><radialGradient id="g8" cx=".4" cy=".3" r=".8"><stop offset="0" stop-color="#b8f0a0"/><stop offset="1" stop-color="#3a9a30"/></radialGradient></defs><circle cx="11" cy="11" r="4.500" fill="url(#g8)" stroke="#8a9a8a" stroke-width=".8"/><path d="M11 8.500v5M8.500 11h5" stroke="#fff" stroke-width="1.700"/></svg>
<svg class="i" style="left:64px;top:327px" width="16" height="16" viewBox="0 0 16 16"><path d="M2 11l7.500-8.500l3.500 3l-7.500 8.500z" fill="#2aa818" stroke="#187808" stroke-width=".6"/><path d="M4 10l6-7" stroke="#90e070" stroke-width="1.200"/><path d="M2 11l3.500 3l-4.500 1.500z" fill="#f4f4e8" stroke="#186808" stroke-width=".6"/><path d="M1 15.500l1.500-.5l-1-1z" fill="#103808"/></svg>
<svg class="i" style="left:86px;top:327px" width="16" height="16" viewBox="0 0 16 16"><path d="M3.500 3.500l9 9M12.500 3.500l-9 9" stroke="#e2564c" stroke-width="2.600" stroke-linecap="round"/><path d="M4 4l8 8M12 4l-8 8" stroke="#f39a92" stroke-width=".9" stroke-linecap="round"/></svg>
<svg class="i" style="left:109px;top:327px" width="16" height="16" viewBox="0 0 16 16"><rect x="0.500" y="0.500" width="15" height="15" rx="1" fill="#b7c5d3" stroke="#a7b7c7"/><rect x="3" y="1.500" width="10" height="4.500" fill="#cfd9e3" stroke="#aebccb" stroke-width=".6"/><rect x="2.500" y="9" width="11" height="6" fill="#c7ccd2"/><text x="8.500" y="14.500" text-anchor="middle" font-family="Liberation Sans,sans-serif" font-weight="bold" font-size="6" fill="#a3b3c3">OK</text></svg>
<svg class="i" style="left:132px;top:327px" width="16" height="16" viewBox="0 0 16 16"><defs><linearGradient id="g9" x1="0" y1="0" x2="0" y2="1"><stop offset="0" stop-color="#9ad0f8"/><stop offset="1" stop-color="#2a80d0"/></linearGradient></defs><path d="M8 1.500l6.500 7h-3.500v5.500h-6v-5.500h-3.500z" fill="url(#g9)" stroke="#2468a8" stroke-width="1"/><path d="M8 3.500l4 4.500h-2v4.500h-4v-4.500h-2z" fill="#c8e8ff" opacity=".6"/></svg>
<svg class="i" style="left:155px;top:327px" width="16" height="16" viewBox="0 0 16 16"><path d="M8 14.500l6.500-7h-3.500v-5.500h-6v5.500h-3.500z" fill="#b9c1c7" stroke="#aeb7be" stroke-width="1"/></svg>
<svg class="i" style="left:178px;top:327px" width="16" height="16" viewBox="0 0 16 16"><text x="0" y="7.300" font-family="Liberation Serif,serif" font-size="10.500" fill="#1848a8">A</text><text x="0" y="15.800" font-family="Liberation Serif,serif" font-size="10.500" fill="#a81818">Я</text><path d="M12 2v11" stroke="#101828" stroke-width="1.200"/><path d="M9.500 11.500l2.500 3.500l2.500-3.500z" fill="#101828"/></svg>
<svg class="i" style="left:201px;top:327px" width="16" height="16" viewBox="0 0 16 16"><text x="0" y="7.300" font-family="Liberation Serif,serif" font-size="10.500" fill="#a81818">Я</text><text x="0" y="15.800" font-family="Liberation Serif,serif" font-size="10.500" fill="#1848a8">A</text><path d="M12 2v11" stroke="#101828" stroke-width="1.200"/><path d="M9.500 11.500l2.500 3.500l2.500-3.500z" fill="#101828"/></svg>
<svg class="i" style="left:224px;top:327px" width="16" height="16" viewBox="0 0 16 16"><rect x="0" y="0.500" width="16" height="7" fill="#c8c8e8"/><path d="M5 2.500h10M5 5.500h10" stroke="#8080c8" stroke-width="1.300"/><path d="M0 8h16" stroke="#90d020" stroke-width="1.200"/><circle cx="2.800" cy="3.500" r="2" fill="#fff060"/><path d="M2.800 0.500v6M0 3.500h5.600M.8 1.500l4 4M4.800 1.500l-4 4" stroke="#f8e020" stroke-width=".7"/><path d="M1 9.500v5.500M3.500 9.500v5.500M5.500 9.500v5.500M8 9.500v5.500M10 9.500v5.500M12.500 9.500v5.500M14.500 9.500v5.500" stroke="#000" stroke-width="1.400"/></svg>
<div class="vs" style="left:246px;top:326px;height:18px"></div>
<div class="t" style="left:254px;top:329px;color:#4a3a10">Заполнить</div>
<svg class="i" style="left:310px;top:334px" width="5" height="3" viewBox="0 0 5 3"><path d="M0 0H5L2.5 3Z" fill="#3b2a05"/></svg>
<div class="vs" style="left:321px;top:326px;height:18px"></div>
<div class="t" style="left:329px;top:329px;color:#4a3a10">Подбор</div>
<div class="vs" style="left:373px;top:326px;height:18px"></div>
<div class="t" style="left:381px;top:329px;color:#4a3a10">Изменить</div>
<div style="left:14px;top:347px;width:1246px;height:491px;border:1px solid #aca685;background:#fff;box-sizing:border-box"></div>
<div style="left:15px;top:348px;width:1244px;height:20px;background:#f3efdf"></div>
<div style="left:74px;top:348px;width:566px;height:20px;background:#d0ccb9"></div>
<div style="left:15px;top:368px;width:1244px;height:1px;background:#aca685"></div>
<div style="left:15px;top:387px;width:1244px;height:1px;background:#aca685"></div>
<div style="left:15px;top:406px;width:1244px;height:1px;background:#aca685"></div>
<div style="left:15px;top:425px;width:1244px;height:1px;background:#aca685"></div>
<div style="left:73px;top:348px;width:1px;height:78px;background:#aca685"></div>
<div style="left:640px;top:348px;width:1px;height:78px;background:#aca685"></div>
<div style="left:986px;top:348px;width:1px;height:78px;background:#aca685"></div>
<div style="left:1122px;top:348px;width:1px;height:78px;background:#aca685"></div>
<div class="t" style="left:19px;top:352px;color:#2a2410">N</div>
<div class="t" style="left:78px;top:352px;color:#2a2410">Номенклатура</div>
<div class="t" style="left:645px;top:352px;color:#2a2410">Качество</div>
<div class="t" style="left:991px;top:352px;color:#2a2410;font-size:9.5px">%</div>
<div class="t" style="left:1127px;top:352px;color:#2a2410">Огр. (RUB)</div>
<div style="left:74px;top:407px;width:566px;height:18px;background:#4f66c1"></div>
<div class="t" style="left:15px;top:373px;width:54px;text-align:right">1</div>
<div class="t" style="left:78px;top:373px;">Бриджи жен</div>
<div class="t" style="left:645px;top:373px;">Новый</div>
<div class="t" style="left:15px;top:392px;width:54px;text-align:right">2</div>
<div class="t" style="left:78px;top:392px;">Белье 3</div>
<div class="t" style="left:645px;top:392px;">Новый</div>
<div class="t" style="left:15px;top:411px;width:54px;text-align:right">3</div>
<div class="t" style="left:78px;top:411px;color:#fff">Ветровка жен</div>
<div class="t" style="left:645px;top:411px;">Новый</div>
</div>
<div class="g" id="annotations">
<div style="left:669px;top:296px;width:177px;height:2px;background:#a9a485"></div>
<div style="left:669px;top:298px;width:177px;height:19px;background:#fff"></div>
<div style="left:668px;top:296px;width:1px;height:40px;background:#a9a485"></div>
<div style="left:669px;top:317px;width:177px;height:19px;background:#4f66c1"></div>
<div style="left:672px;top:325px;width:62px;height:8px;background:#fff"></div>
<div class="t" style="left:670px;top:298px;font-family:'DejaVu Sans','Liberation Sans',sans-serif;color:#ed1c24;font-size:11.7px;line-height:16px;letter-spacing:.3px">Процент</div>
<div class="t" style="left:670px;top:316px;font-family:'DejaVu Sans','Liberation Sans',sans-serif;color:#ed1c24;font-size:11.7px;line-height:16px;letter-spacing:.4px">Цена</div>
<div style="left:631px;top:270px;width:36px;height:34px;border:1px solid #e02030;box-sizing:border-box"></div>
<svg class="i" style="left:656px;top:318px" width="12" height="16" viewBox="0 0 12 16"><path d="M0.300 3.500L7.500 14.500L9.500 0.300" stroke="#22b14c" stroke-width="1.100" fill="none"/></svg>
<div class="t" style="left:988px;top:309px;font-family:'DejaVu Sans','Liberation Sans',sans-serif;color:#ed1c24;font-size:11.7px;line-height:16px">В зависимости от выбранного типа</div>
<div class="t" style="left:988px;top:327px;font-family:'DejaVu Sans','Liberation Sans',sans-serif;color:#ed1c24;font-size:11.7px;line-height:16px">скидки</div>
<div class="t" style="left:1007px;top:352px;font-family:'DejaVu Sans','Liberation Sans',sans-serif;color:#ed1c24;font-size:11.7px;line-height:16px;letter-spacing:.15px">или цена</div>
<div class="t" style="left:990px;top:371px;font-family:'DejaVu Sans','Liberation Sans',sans-serif;color:#22b14c;font-size:11.3px;line-height:15px">200</div>
<div class="t" style="left:995px;top:388px;font-family:'DejaVu Sans','Liberation Sans',sans-serif;color:#22b14c;font-size:11.3px;line-height:15px">200</div>
<div class="t" style="left:991px;top:408px;font-family:'DejaVu Sans','Liberation Sans',sans-serif;color:#22b14c;font-size:11.3px;line-height:15px">300</div>
</div>
<div class="g" id="form-footer">
<div class="t" style="left:7px;top:854px;color:#1a1a1a">Ответственный:</div>
<div style="left:93px;top:850px;width:534px;height:19px;background:#fff;border:1px solid #aca685;box-sizing:border-box"></div>
<div style="left:611px;top:850px;width:16px;height:19px;background:#ece6d9;border:1px solid #aca685;box-sizing:border-box"></div>
<svg class="i" style="left:614px;top:853px" width="11" height="12" viewBox="0 0 11 12"><circle cx="4.500" cy="4.500" r="3.300" stroke="#5a4304" stroke-width="1.200" fill="none"/><path d="M7 7.300L10 10.800" stroke="#5a4304" stroke-width="1.800"/></svg>
<div style="left:596px;top:850px;width:16px;height:19px;background:#ece6d9;border:1px solid #aca685;box-sizing:border-box"></div>
<svg class="i" style="left:600px;top:855px" width="9" height="9" viewBox="0 0 9 9"><path d="M1 1L8 8M8 1L1 8" stroke="#5a4304" stroke-width="1.8" fill="none"/></svg>
<div style="left:581px;top:850px;width:16px;height:19px;background:#ece6d9;border:1px solid #aca685;box-sizing:border-box"></div>
<svg class="i" style="left:584px;top:863px" width="10" height="2" viewBox="0 0 10 2" shape-rendering="crispEdges"><path d="M0 0h2v2h-2zM4 0h2v2h-2zM8 0h2v2h-2z" fill="#5a4304"/></svg>
<svg class="i" style="left:104px;top:860px" width="26" height="6" viewBox="0 0 26 6"><path d="M.5 2.500q1.500 1.800 4 .3M6 1.200q2.500 2 4.500 0M11 3.800v-1.300h5v1.300M12 2.300q1.500-1.500 3 0M20.500 1.500v2.500M23 1.500v2.500" stroke="#1a1a2a" stroke-width="1.300" fill="none"/></svg>
<div class="t" style="left:7px;top:878px;color:#1a1a1a">Комментарий:</div>
<div style="left:93px;top:874px;width:1174px;height:19px;background:#fff;border:1px solid #aca685;box-sizing:border-box"></div>
</div>
<div class="g" id="button-bar">
<div class="vs" style="left:1124px;top:905px;height:18px"></div>
<div class="t" style="left:1132px;top:908px;color:#4a3a10;font-weight:bold;font-size:12px">OK</div>
<div class="vs" style="left:1155px;top:905px;height:18px"></div>
<div class="t" style="left:1163px;top:908px;color:#4a3a10">Записать</div>
<div class="vs" style="left:1217px;top:905px;height:18px"></div>
<div class="t" style="left:1225px;top:908px;color:#4a3a10;letter-spacing:.2px">Закрыть</div>
<div style="left:0px;top:927px;width:1277px;height:2px;background:#fff"></div>
</div>
<div class="g" id="window-tabs">
<div style="left:0px;top:929px;width:170px;height:20px;background:#b4b4b4;border:1px solid #a8a8a8;box-sizing:border-box"></div>
<svg class="i" style="left:1px;top:931px" width="16" height="16" viewBox="0 0 16 16"><rect x="0.500" y="0.500" width="13" height="14" fill="#fff" stroke="#8e9db5"/><path d="M5.500 3.500h5M2.500 5.500h9M2.500 7.500h9M2.500 9.500h9M2.500 11.500h9" stroke="#b9c7da" stroke-width="1"/></svg>
<div class="t" style="left:17px;top:933px;color:#1a1a1a;letter-spacing:.18px">Установки скидок номенкл...</div>
<div style="left:171px;top:929px;width:171px;height:20px;background:#b8d0ea;border:1px solid #a9a58c;box-sizing:border-box"></div>
<svg class="i" style="left:174px;top:931px" width="16" height="16" viewBox="0 0 16 16"><rect x="0.500" y="0.500" width="13" height="14" fill="#fff" stroke="#8e9db5"/><path d="M5.500 3.500h5M2.500 5.500h9M2.500 7.500h9M2.500 9.500h9M2.500 11.500h9" stroke="#b9c7da" stroke-width="1"/></svg>
<div class="t" style="left:190px;top:933px;color:#1a1a1a">...: по номенклатуре. Новый *</div>
</div>
<div class="g" id="status-bar">
<div style="left:0px;top:951px;width:1205px;height:19px;border:1px solid #d3cdbb;border-left:none;box-sizing:border-box"></div>
<div class="t" style="left:1px;top:955px;color:#1a1a1a;font-size:11.2px">Для получения подсказки нажмите F1</div>
<div style="left:1210px;top:951px;width:29px;height:19px;border:1px solid #d3cdbb;box-sizing:border-box"></div>
<div class="t" style="left:1213px;top:955px;color:#a39a78;font-size:11.5px;letter-spacing:-0.9px">CAP</div>
<div style="left:1244px;top:951px;width:34px;height:19px;border:1px solid #d3cdbb;box-sizing:border-box"></div>
<div class="t" style="left:1247px;top:955px;color:#1a1a1a;font-size:11.5px;letter-spacing:-0.7px">NUM</div>
</div>
<div class="g" id="taskbar">
<div style="left:0px;top:970px;width:1277px;height:1px;background:#7d7a74"></div>
<div style="left:0px;top:971px;width:1277px;height:1px;background:#262626"></div>
<div style="left:0px;top:972px;width:1277px;height:1px;background:#8e8e8e"></div>
<div style="left:0px;top:972px;width:57px;height:1px;background:#6a6a6a"></div>
<div style="left:57px;top:972px;width:158px;height:1px;background:#ffffff"></div>
<div style="left:215px;top:972px;width:3px;height:1px;background:#3c3c3c"></div>
<div style="left:218px;top:972px;width:158px;height:1px;background:#ffffff"></div>
<div style="left:1262px;top:971px;width:1px;height:2px;background:#303030"></div>
<div style="left:1263px;top:972px;width:14px;height:1px;background:#b8b8b8"></div>
<svg class="i" style="left:9px;top:965px" width="30" height="8" viewBox="0 0 30 8"><circle cx="15" cy="15.500" r="14.300" fill="#a9c0d2" stroke="#2a72b4" stroke-width="1.200"/></svg>
</div>
</body></html>
